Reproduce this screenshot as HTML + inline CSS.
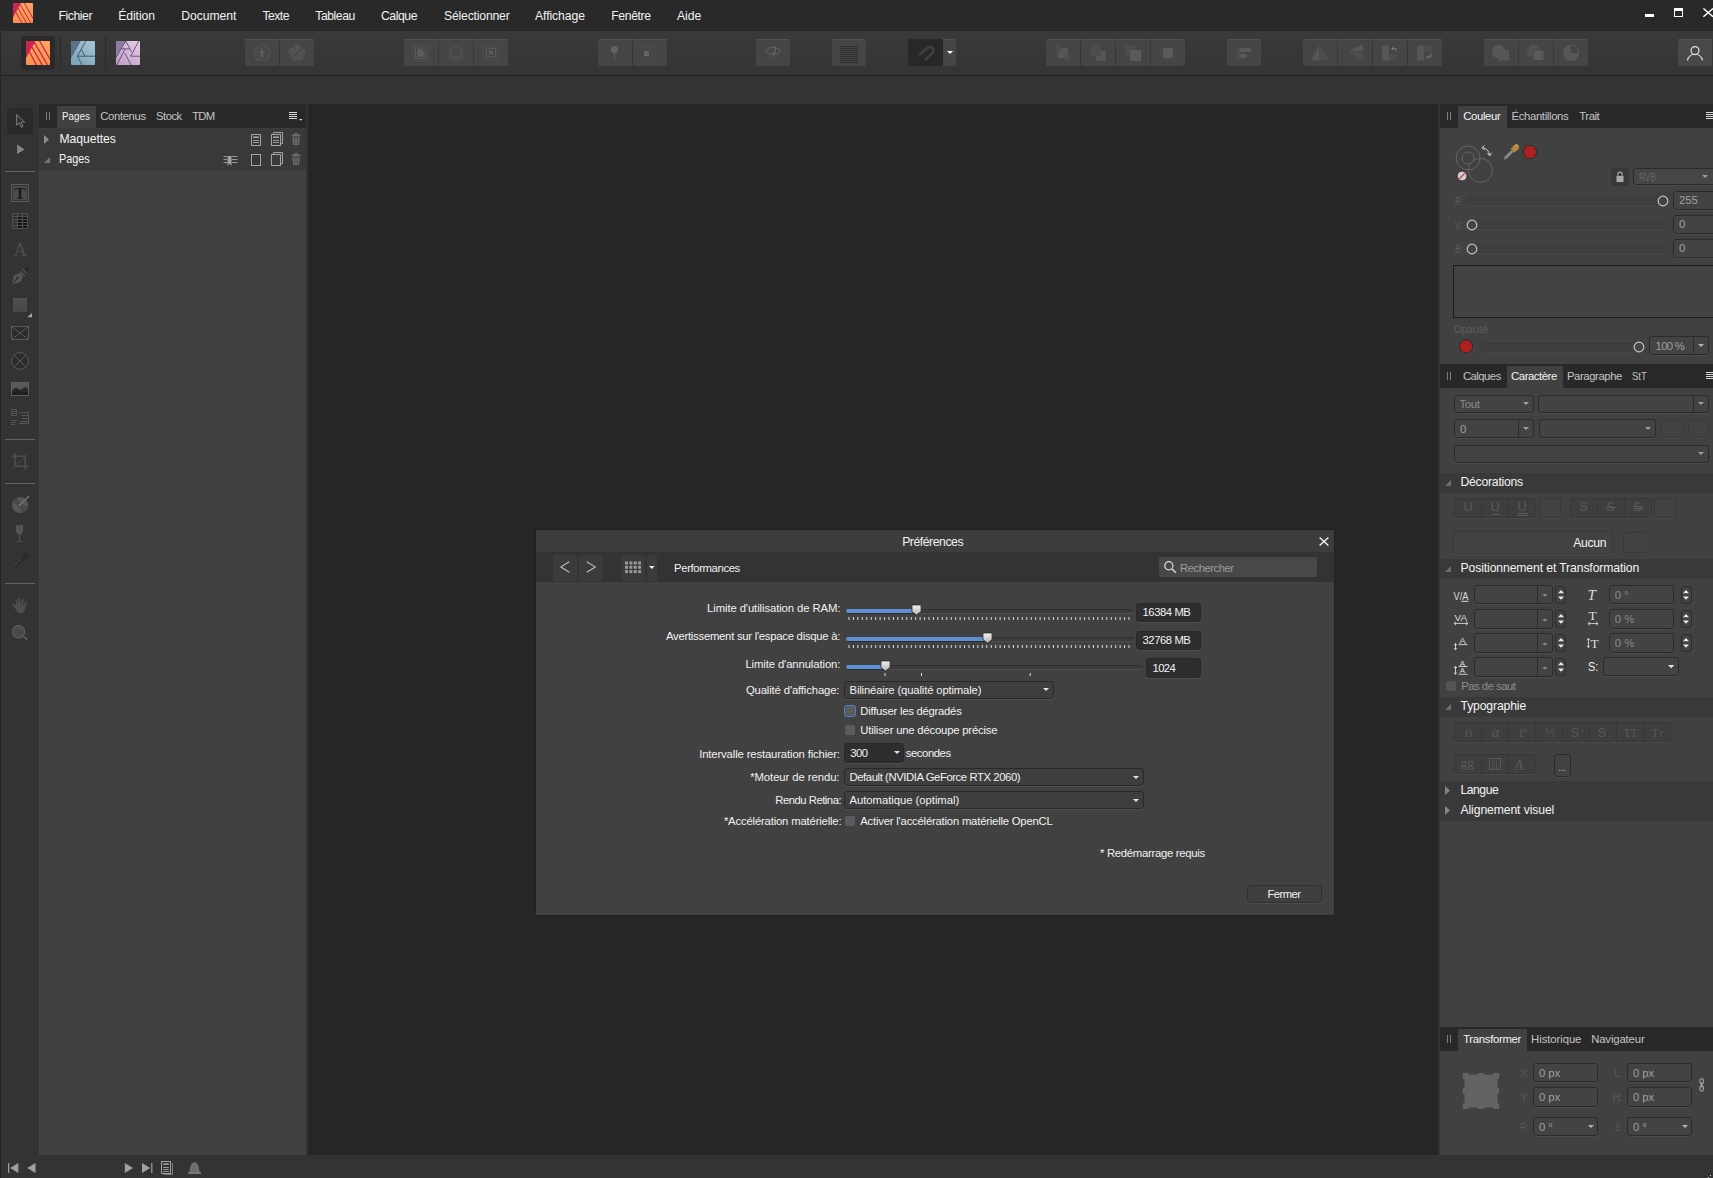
<!DOCTYPE html>
<html lang="fr"><head><meta charset="utf-8"><title>Affinity Publisher - Préférences</title>
<style>
html,body{margin:0;padding:0;background:#262626;}
body{width:1713px;height:1178px;position:relative;overflow:hidden;font-family:"Liberation Sans",sans-serif;}
div,svg,span.t{position:absolute;box-sizing:border-box;}
span.t{white-space:pre;line-height:1;}
svg{overflow:visible;}
</style></head>
<body>
<div style="left:0px;top:0px;width:1713px;height:31px;background:#292929;"></div>
<div style="left:0px;top:31px;width:1713px;height:44px;background:linear-gradient(#3a3a3a,#343434);"></div>
<div style="left:0px;top:75px;width:1713px;height:1px;background:#222222;"></div>
<div style="left:0px;top:76px;width:1713px;height:28px;background:#333333;"></div>
<div style="left:0px;top:104px;width:1713px;height:1051px;background:#333333;"></div>
<div style="left:308px;top:104px;width:1130px;height:1051px;background:#262626;"></div>
<div style="left:0px;top:1155px;width:1713px;height:23px;background:#333333;"></div>
<div style="left:0px;top:31px;width:1px;height:1147px;background:#252525;"></div>
<svg style="left:13px;top:3px;" width="20" height="20" viewBox="0 0 24 24"><defs><linearGradient id="go0" x1="0" y1="0" x2="0" y2="1"><stop offset="0" stop-color="#ffa262"/><stop offset="1" stop-color="#fb9150"/></linearGradient>
<clipPath id="cp0"><rect width="24" height="24" rx="1.1"/></clipPath></defs>
<g clip-path="url(#cp0)"><rect width="24" height="24" fill="url(#go0)"/>
<path d="M0 0H9.6L0 17Z" fill="#cb2450"/>
<g stroke="#b9223f" stroke-width="1.12" fill="none">
<path d="M13.2 -0.6L24.8 19.6"/><path d="M8.3 1.4L22.2 25.2"/><path d="M5.9 6.0L16.9 25.2"/><path d="M3.2 10.4L11.2 25.2"/></g></g></svg>
<span class="t" style="left:58.50px;top:10.20px;font-family:'Liberation Sans',sans-serif;font-size:12.2px;color:#f2f2f2;letter-spacing:-0.430px;">Fichier</span>
<span class="t" style="left:118.20px;top:10.20px;font-family:'Liberation Sans',sans-serif;font-size:12.2px;color:#f2f2f2;letter-spacing:-0.078px;">Édition</span>
<span class="t" style="left:181.20px;top:10.20px;font-family:'Liberation Sans',sans-serif;font-size:12.2px;color:#f2f2f2;letter-spacing:-0.035px;">Document</span>
<span class="t" style="left:262.40px;top:10.20px;font-family:'Liberation Sans',sans-serif;font-size:12.2px;color:#f2f2f2;letter-spacing:-0.510px;">Texte</span>
<span class="t" style="left:315.30px;top:10.20px;font-family:'Liberation Sans',sans-serif;font-size:12.2px;color:#f2f2f2;letter-spacing:-0.451px;">Tableau</span>
<span class="t" style="left:380.90px;top:10.20px;font-family:'Liberation Sans',sans-serif;font-size:12.2px;color:#f2f2f2;letter-spacing:-0.405px;">Calque</span>
<span class="t" style="left:444.00px;top:10.20px;font-family:'Liberation Sans',sans-serif;font-size:12.2px;color:#f2f2f2;letter-spacing:-0.179px;">Sélectionner</span>
<span class="t" style="left:535.00px;top:10.20px;font-family:'Liberation Sans',sans-serif;font-size:12.2px;color:#f2f2f2;letter-spacing:-0.076px;">Affichage</span>
<span class="t" style="left:611.30px;top:10.20px;font-family:'Liberation Sans',sans-serif;font-size:12.2px;color:#f2f2f2;letter-spacing:-0.386px;">Fenêtre</span>
<span class="t" style="left:676.90px;top:10.20px;font-family:'Liberation Sans',sans-serif;font-size:12.2px;color:#f2f2f2;letter-spacing:-0.035px;">Aide</span>
<div style="left:1645px;top:14px;width:9px;height:3px;background:#ffffff;"></div>
<div style="left:1674px;top:8px;width:9px;height:9px;border:1px solid #fff;border-top-width:3px;"></div>
<svg style="left:1703px;top:7.6px;" width="10" height="9" viewBox="0 0 10 9"><path d="M0.4 0.5L10 8.8M10 0.5L0.4 8.8" stroke="#fff" stroke-width="1.45" fill="none"/></svg>
<div style="left:21px;top:36px;width:34px;height:34px;background:#2a2a2a;border-radius:4px;"></div>
<svg style="left:26px;top:41px;" width="24" height="24" viewBox="0 0 24 24"><defs><linearGradient id="go" x1="0" y1="0" x2="0" y2="1"><stop offset="0" stop-color="#ffa262"/><stop offset="1" stop-color="#fb9150"/></linearGradient>
<clipPath id="cp"><rect width="24" height="24" rx="1.1"/></clipPath></defs>
<g clip-path="url(#cp)"><rect width="24" height="24" fill="url(#go)"/>
<path d="M0 0H9.6L0 17Z" fill="#cb2450"/>
<g stroke="#b9223f" stroke-width="1.12" fill="none">
<path d="M13.2 -0.6L24.8 19.6"/><path d="M8.3 1.4L22.2 25.2"/><path d="M5.9 6.0L16.9 25.2"/><path d="M3.2 10.4L11.2 25.2"/></g></g></svg>
<div style="left:60px;top:36px;width:1px;height:34px;background:#2a2a2a;"></div>
<div style="left:105px;top:36px;width:1px;height:34px;background:#2a2a2a;"></div>
<svg style="left:71px;top:41px;" width="24" height="24" viewBox="0 0 24 24"><defs><linearGradient id="gd" x1="1" y1="0" x2="0.3" y2="1"><stop offset="0" stop-color="#a6c8d3"/><stop offset="1" stop-color="#7ea4b8"/></linearGradient><clipPath id="cd"><rect width="24" height="24" rx="1.1"/></clipPath></defs>
<g clip-path="url(#cd)"><rect width="24" height="24" fill="url(#gd)"/><path d="M0 0H9.3L0 16.5Z" fill="#5b7189"/>
<g stroke="#41566b" stroke-width="0.95" fill="none"><path d="M9.3 0L0 16.6" stroke-width="0.6"/><path d="M15.1 -0.5L6.3 15.2L11.5 24.6"/><path d="M10.4 8.7L14 15.2"/><path d="M6.3 15.2H25"/></g></g></svg>
<svg style="left:116px;top:41px;" width="24" height="24" viewBox="0 0 24 24"><defs><linearGradient id="gp" x1="1" y1="0" x2="0.2" y2="1"><stop offset="0" stop-color="#e6cfe6"/><stop offset="1" stop-color="#c49fc9"/></linearGradient><clipPath id="cq"><rect width="24" height="24" rx="1.1"/></clipPath></defs>
<g clip-path="url(#cq)"><rect width="24" height="24" fill="url(#gp)"/><path d="M0 0H9.5L0 16.5Z" fill="#8f7ba6"/>
<g stroke="#5d4c72" stroke-width="0.9" fill="none"><path d="M9.7 0L0 16.6"/><path d="M9.7 0L15.6 11"/><path d="M5.6 7.9H13.6"/><path d="M23 -0.6L14.8 15.2H25"/><path d="M9.2 7.9L0.5 24.6"/><path d="M8.9 12.4L15.3 24.6"/></g></g></svg>
<div style="left:245px;top:39px;width:34px;height:27px;background:#454545;border-top:1px solid #525252;border-radius:2px 0px 0px 2px;"></div>
<div style="left:280px;top:39px;width:34px;height:27px;background:#454545;border-top:1px solid #525252;border-radius:0px 2px 2px 0px;"></div>
<svg style="left:0px;top:0px;" width="1713" height="80" viewBox="0 0 1713 80"><circle cx="262.0" cy="48.4" r="4.1" fill="#585858"/><circle cx="266.4" cy="51.6" r="4.1" fill="#585858"/><circle cx="264.7" cy="56.7" r="4.1" fill="#585858"/><circle cx="259.3" cy="56.7" r="4.1" fill="#585858"/><circle cx="257.6" cy="51.6" r="4.1" fill="#585858"/><circle cx="262.0" cy="48.4" r="3.3" fill="#494949"/><circle cx="266.4" cy="51.6" r="3.3" fill="#494949"/><circle cx="264.7" cy="56.7" r="3.3" fill="#494949"/><circle cx="259.3" cy="56.7" r="3.3" fill="#494949"/><circle cx="257.6" cy="51.6" r="3.3" fill="#494949"/><circle cx="262" cy="53" r="4.5" fill="#494949"/><path d="M262 49L265 53H263.2V57H260.8V53H259Z" fill="#5e5e5e"/></svg>
<svg style="left:0px;top:0px;" width="1713" height="80" viewBox="0 0 1713 80"><circle cx="297.0" cy="48.4" r="4.1" fill="#525252"/><circle cx="301.4" cy="51.6" r="4.1" fill="#525252"/><circle cx="299.7" cy="56.7" r="4.1" fill="#525252"/><circle cx="294.3" cy="56.7" r="4.1" fill="#525252"/><circle cx="292.6" cy="51.6" r="4.1" fill="#525252"/><circle cx="297" cy="53" r="4.5" fill="#525252"/><path d="M291 59.5L303.5 47" stroke="#454545" stroke-width="1.4"/></svg>
<div style="left:404px;top:39px;width:34px;height:27px;background:#454545;border-top:1px solid #525252;border-radius:2px 0px 0px 2px;"></div>
<div style="left:439px;top:39px;width:34px;height:27px;background:#454545;border-top:1px solid #525252;border-radius:0px 0px 0px 0px;"></div>
<div style="left:474px;top:39px;width:34px;height:27px;background:#454545;border-top:1px solid #525252;border-radius:0px 2px 2px 0px;"></div>
<svg style="left:0px;top:0px;" width="1713" height="80" viewBox="0 0 1713 80"><rect x="412" y="44" width="18" height="1" fill="#4b4b4b"/><rect x="412" y="46" width="18" height="1" fill="#4b4b4b"/><rect x="412" y="48" width="18" height="1" fill="#4b4b4b"/><rect x="412" y="50" width="18" height="1" fill="#4b4b4b"/><rect x="412" y="52" width="18" height="1" fill="#4b4b4b"/><rect x="412" y="54" width="18" height="1" fill="#4b4b4b"/><rect x="412" y="56" width="18" height="1" fill="#4b4b4b"/><rect x="412" y="58" width="18" height="1" fill="#4b4b4b"/><rect x="412" y="60" width="18" height="1" fill="#4b4b4b"/></svg>
<svg style="left:0px;top:0px;" width="1713" height="80" viewBox="0 0 1713 80"><rect x="447" y="44" width="18" height="1" fill="#4b4b4b"/><rect x="447" y="46" width="18" height="1" fill="#4b4b4b"/><rect x="447" y="48" width="18" height="1" fill="#4b4b4b"/><rect x="447" y="50" width="18" height="1" fill="#4b4b4b"/><rect x="447" y="52" width="18" height="1" fill="#4b4b4b"/><rect x="447" y="54" width="18" height="1" fill="#4b4b4b"/><rect x="447" y="56" width="18" height="1" fill="#4b4b4b"/><rect x="447" y="58" width="18" height="1" fill="#4b4b4b"/><rect x="447" y="60" width="18" height="1" fill="#4b4b4b"/></svg>
<svg style="left:0px;top:0px;" width="1713" height="80" viewBox="0 0 1713 80"><rect x="482" y="44" width="18" height="1" fill="#4b4b4b"/><rect x="482" y="46" width="18" height="1" fill="#4b4b4b"/><rect x="482" y="48" width="18" height="1" fill="#4b4b4b"/><rect x="482" y="50" width="18" height="1" fill="#4b4b4b"/><rect x="482" y="52" width="18" height="1" fill="#4b4b4b"/><rect x="482" y="54" width="18" height="1" fill="#4b4b4b"/><rect x="482" y="56" width="18" height="1" fill="#4b4b4b"/><rect x="482" y="58" width="18" height="1" fill="#4b4b4b"/><rect x="482" y="60" width="18" height="1" fill="#4b4b4b"/></svg>
<svg style="left:0px;top:0px;" width="1713" height="80" viewBox="0 0 1713 80"><path d="M415.5 46.6H421.5L426.5 51.6V58.5H415.5Z" fill="#454545" stroke="#585858" stroke-width="1"/><path d="M417.3 48.4H420.8L424.7 52.3V56.7H417.3Z" fill="#5c5c5c"/></svg>
<svg style="left:0px;top:0px;" width="1713" height="80" viewBox="0 0 1713 80"><circle cx="456" cy="52.5" r="6" fill="none" stroke="#585858" stroke-width="1"/></svg>
<svg style="left:0px;top:0px;" width="1713" height="80" viewBox="0 0 1713 80"><rect x="486.5" y="48.5" width="9" height="8" fill="#454545" stroke="#585858" stroke-width="1"/><path d="M488.8 50.3L493.2 54.7M493.2 50.3L488.8 54.7" stroke="#666" stroke-width="1.1"/></svg>
<div style="left:598px;top:39px;width:34px;height:27px;background:#454545;border-top:1px solid #525252;border-radius:2px 0px 0px 2px;"></div>
<div style="left:633px;top:39px;width:34px;height:27px;background:#454545;border-top:1px solid #525252;border-radius:0px 2px 2px 0px;"></div>
<svg style="left:0px;top:0px;" width="1713" height="80" viewBox="0 0 1713 80"><circle cx="614.5" cy="49.6" r="3.6" fill="#626262"/><rect x="614" y="52" width="1" height="7" fill="#626262"/></svg>
<svg style="left:0px;top:0px;" width="1713" height="80" viewBox="0 0 1713 80"><rect x="644" y="51" width="5" height="5" fill="#666"/><rect x="642" y="45" width="9" height="1" fill="#4a4a4a"/><rect x="642" y="47" width="16" height="1" fill="#4a4a4a"/><rect x="642" y="49" width="10" height="1" fill="#4a4a4a"/><rect x="650" y="51" width="9" height="1" fill="#4a4a4a"/><rect x="650" y="53" width="4" height="1" fill="#4a4a4a"/><rect x="650" y="55" width="8" height="1" fill="#4a4a4a"/><rect x="642" y="57" width="10" height="1" fill="#4a4a4a"/><rect x="642" y="59" width="16" height="1" fill="#4a4a4a"/></svg>
<div style="left:756px;top:39px;width:34px;height:27px;background:#454545;border-top:1px solid #525252;border-radius:2px 2px 2px 2px;"></div>
<svg style="left:0px;top:0px;" width="1713" height="80" viewBox="0 0 1713 80"><path d="M765.5 50.5Q773 43.5 780.5 50.5L777.5 54.5Q773 51.5 768.5 54.5Z" fill="none" stroke="#646464" stroke-width="1"/><path d="M776 47.5L773 57" stroke="#6a6a6a" stroke-width="1.2"/></svg>
<div style="left:832px;top:39px;width:34px;height:27px;background:#454545;border-top:1px solid #525252;border-radius:2px 2px 2px 2px;"></div>
<svg style="left:0px;top:0px;" width="1713" height="80" viewBox="0 0 1713 80"><rect x="840" y="46" width="18" height="1" fill="#2e2e2e"/><rect x="840" y="48" width="18" height="1" fill="#2e2e2e"/><rect x="840" y="50" width="18" height="1" fill="#2e2e2e"/><rect x="840" y="52" width="18" height="1" fill="#2e2e2e"/><rect x="840" y="54" width="18" height="1" fill="#2e2e2e"/><rect x="840" y="56" width="18" height="1" fill="#2e2e2e"/><rect x="840" y="58" width="18" height="1" fill="#2e2e2e"/><rect x="840" y="60" width="18" height="1" fill="#2e2e2e"/><rect x="840" y="62" width="18" height="1" fill="#2e2e2e"/></svg>
<div style="left:908px;top:39px;width:35px;height:27px;background:#282828;border-radius:2px 0 0 2px;"></div>
<svg style="left:0px;top:0px;" width="1713" height="80" viewBox="0 0 1713 80"><path d="M919 55L928 47.5A3.6 3.6 0 0 1 932.5 53L925 60" fill="none" stroke="#3f3f3f" stroke-width="2.6"/></svg>
<div style="left:943px;top:39px;width:13px;height:27px;background:#454545;border-top:1px solid #525252;border-radius:0 2px 2px 0;"></div>
<svg style="left:947px;top:51px;" width="6" height="3" viewBox="0 0 6 3"><path d="M0 0H6L3 3Z" fill="#fff"/></svg>
<div style="left:1046px;top:39px;width:34px;height:27px;background:#454545;border-top:1px solid #525252;border-radius:2px 0px 0px 2px;"></div>
<div style="left:1081px;top:39px;width:34px;height:27px;background:#454545;border-top:1px solid #525252;border-radius:0px 0px 0px 0px;"></div>
<div style="left:1116px;top:39px;width:34px;height:27px;background:#454545;border-top:1px solid #525252;border-radius:0px 0px 0px 0px;"></div>
<div style="left:1151px;top:39px;width:34px;height:27px;background:#454545;border-top:1px solid #525252;border-radius:0px 2px 2px 0px;"></div>
<svg style="left:0px;top:0px;" width="1713" height="80" viewBox="0 0 1713 80"><rect x="1058" y="48" width="10" height="10" fill="#565656"/><rect x="1055" y="45" width="6" height="6" fill="#4c4c4c"/><rect x="1065" y="55" width="6" height="6" fill="#4c4c4c"/>
<rect x="1096" y="51" width="10" height="10" fill="#565656"/><rect x="1090" y="45" width="11" height="11" fill="#4c4c4c"/>
<rect x="1125" y="45" width="10" height="10" fill="#4c4c4c"/><rect x="1130" y="50" width="11" height="11" fill="#5a5a5a"/>
<rect x="1166.5" y="51.5" width="9" height="9" fill="none" stroke="#494949"/><rect x="1160.5" y="45.5" width="9" height="9" fill="none" stroke="#494949"/><rect x="1163" y="48" width="10" height="10" fill="#5a5a5a"/></svg>
<div style="left:1227px;top:39px;width:34px;height:27px;background:#454545;border-top:1px solid #525252;border-radius:2px 2px 2px 2px;"></div>
<svg style="left:0px;top:0px;" width="1713" height="80" viewBox="0 0 1713 80"><rect x="1237" y="45" width="1" height="16" fill="#4c4c4c"/><rect x="1239" y="48" width="12" height="4" fill="#585858"/><rect x="1239" y="54" width="8" height="4" fill="#585858"/></svg>
<div style="left:1303px;top:39px;width:34px;height:27px;background:#454545;border-top:1px solid #525252;border-radius:2px 0px 0px 2px;"></div>
<div style="left:1338px;top:39px;width:34px;height:27px;background:#454545;border-top:1px solid #525252;border-radius:0px 0px 0px 0px;"></div>
<div style="left:1373px;top:39px;width:34px;height:27px;background:#454545;border-top:1px solid #525252;border-radius:0px 0px 0px 0px;"></div>
<div style="left:1408px;top:39px;width:34px;height:27px;background:#454545;border-top:1px solid #525252;border-radius:0px 2px 2px 0px;"></div>
<svg style="left:0px;top:0px;" width="1713" height="80" viewBox="0 0 1713 80"><path d="M1311 60.6L1319.2 45V60.6Z" fill="#565656"/><path d="M1320 45L1329 60.6H1320Z" fill="#4c4c4c"/>
<path d="M1348 51.3L1363 44.2V51.3Z" fill="#565656"/><path d="M1348 52.3H1363V62Z" fill="#4c4c4c"/>
<rect x="1382" y="45.5" width="7" height="15" fill="#565656"/><rect x="1389" y="54" width="8" height="6.5" fill="#4c4c4c"/><path d="M1396 51.5V48.5H1391.5M1393.3 46.8L1391.5 48.5L1393.3 50.2" fill="none" stroke="#777" stroke-width="1"/>
<rect x="1417" y="45.5" width="7" height="15" fill="#565656"/><rect x="1424" y="45.5" width="8" height="6" fill="#4c4c4c"/><path d="M1431 53.5V57H1426.5M1428.3 55.3L1426.5 57L1428.3 58.7" fill="none" stroke="#777" stroke-width="1"/></svg>
<div style="left:1484px;top:39px;width:34px;height:27px;background:#454545;border-top:1px solid #525252;border-radius:2px 0px 0px 2px;"></div>
<div style="left:1519px;top:39px;width:34px;height:27px;background:#454545;border-top:1px solid #525252;border-radius:0px 0px 0px 0px;"></div>
<div style="left:1554px;top:39px;width:34px;height:27px;background:#454545;border-top:1px solid #525252;border-radius:0px 2px 2px 0px;"></div>
<svg style="left:0px;top:0px;" width="1713" height="80" viewBox="0 0 1713 80"><circle cx="1498.5" cy="51.5" r="6.7" fill="#565656"/><rect x="1498" y="50" width="11" height="10.6" fill="#565656"/>
<circle cx="1533.5" cy="51.2" r="6.6" fill="#515151"/><rect x="1533" y="50" width="11" height="10.6" fill="#5a5a5a" stroke="#454545" stroke-width="1"/>
<path d="M1571 45A8 8 0 1 0 1579 53H1571Z" fill="#565656"/><path d="M1571 45A8 8 0 0 1 1579 53" fill="none" stroke="#565656" stroke-width="1.2"/><rect x="1572" y="54" width="7" height="7" fill="#565656" opacity="0.0"/><path d="M1572 61V54H1578.8A8 8 0 0 1 1572 61Z" fill="#565656"/></svg>
<div style="left:1678px;top:39px;width:34px;height:27px;background:#484848;border-top:1px solid #555;border-radius:2px;"></div>
<svg style="left:0px;top:0px;" width="1713" height="80" viewBox="0 0 1713 80"><circle cx="1695" cy="50.6" r="4" fill="none" stroke="#e6e6e6" stroke-width="1.2"/><path d="M1687.4 60.3A7.8 7.8 0 0 1 1702.6 60.3" fill="none" stroke="#e6e6e6" stroke-width="1.2"/></svg>
<div style="left:6px;top:107px;width:28px;height:28px;background:#2a2a2a;border-radius:4px;border:1px solid #313131;"></div>
<svg style="left:0px;top:0px;" width="40" height="700" viewBox="0 0 40 700"><path d="M16.6 114.5V125.2L19.2 122.8L21.2 127.3L23 126.5L21 122.1H24.6Z" fill="#313131" stroke="#7c7c7c" stroke-width="1" stroke-linejoin="round"/><path d="M16.6 143.6V154.8L25.4 149.6Z" fill="#858585" stroke="#2a2a2a" stroke-width="0.8" stroke-linejoin="round"/><rect x="5" y="171" width="30" height="1" fill="#626262"/><rect x="5" y="439" width="30" height="1" fill="#626262"/><rect x="5" y="483" width="30" height="1" fill="#626262"/><rect x="5" y="583" width="30" height="1" fill="#626262"/><rect x="11.5" y="184.5" width="17" height="17" fill="none" stroke="#5c5c5c"/><rect x="13" y="186" width="14" height="14" fill="#4c4c4c"/><text x="20" y="199.3" font-family="Liberation Serif,serif" font-size="17" font-weight="bold" text-anchor="middle" fill="#1c1c1c">T</text><rect x="12" y="213" width="16" height="16" rx="0.8" fill="#4f4f4f"/><rect x="13" y="214.1" width="3.9" height="1.8" fill="#2f2f2f"/><rect x="13" y="217.1" width="3.9" height="1.8" fill="#2f2f2f"/><rect x="13" y="220.1" width="3.9" height="1.8" fill="#2f2f2f"/><rect x="13" y="223.05" width="3.9" height="1.8" fill="#2f2f2f"/><rect x="13" y="226" width="3.9" height="1.8" fill="#2f2f2f"/><rect x="18" y="214.1" width="3.9" height="1.8" fill="#2f2f2f"/><rect x="18" y="217.1" width="3.9" height="1.8" fill="#0e0e0e"/><rect x="18" y="220.1" width="3.9" height="1.8" fill="#0e0e0e"/><rect x="18" y="223.05" width="3.9" height="1.8" fill="#0e0e0e"/><rect x="18" y="226" width="3.9" height="1.8" fill="#0e0e0e"/><rect x="23.1" y="214.1" width="3.9" height="1.8" fill="#2f2f2f"/><rect x="23.1" y="217.1" width="3.9" height="1.8" fill="#0e0e0e"/><rect x="23.1" y="220.1" width="3.9" height="1.8" fill="#0e0e0e"/><rect x="23.1" y="223.05" width="3.9" height="1.8" fill="#0e0e0e"/><rect x="23.1" y="226" width="3.9" height="1.8" fill="#0e0e0e"/><text x="20.2" y="255.8" font-family="Liberation Serif,serif" font-size="18.5" text-anchor="middle" fill="#4e4e4e">A</text><path d="M11.9 284.7L13.7 275.7L20 272.8L23 276L20.9 281.7Z" fill="#565656"/><path d="M12.4 284.2L17.4 278.2" stroke="#272727" stroke-width="1"/><circle cx="17.7" cy="277.8" r="1.15" fill="#272727"/><path d="M23.6 268.4L27.2 272.2L29 267.6L28.4 267Z" fill="#2a2a2a"/><path d="M20.3 271.3L24.8 275.7" stroke="#5a5a5a" stroke-width="1.2"/><path d="M21.25 270.25L25.75 274.65" stroke="#232323" stroke-width="0.9"/><path d="M22.2 269.2L26.6 273.6" stroke="#5a5a5a" stroke-width="1.2"/><defs><linearGradient id="grt" x1="0" y1="0" x2="0" y2="1"><stop offset="0" stop-color="#505050"/><stop offset="1" stop-color="#474747"/></linearGradient></defs><rect x="13" y="298" width="14" height="14" fill="url(#grt)"/><path d="M32 313V317.3H27.3Z" fill="#a8a8a8"/><rect x="11.5" y="326.5" width="17" height="13" fill="#2c2c2c" stroke="#585858"/><path d="M11.5 326.5L28.5 339.5M28.5 326.5L11.5 339.5" stroke="#585858" stroke-width="1"/><circle cx="20" cy="361" r="8.4" fill="#2c2c2c" stroke="#585858"/><path d="M14.1 355.1L25.9 366.9M25.9 355.1L14.1 366.9" stroke="#585858" stroke-width="1"/><rect x="11.5" y="382.5" width="17" height="13" fill="#585858" stroke="#5e5e5e"/><path d="M12 391Q15 386 18 388.5T23 388Q26 386 28 389V395H12Z" fill="#2a2a2a"/><path d="M12 393Q17 390 21 391.5T28 392V395H12Z" fill="#1e1e1e"/><g fill="none" stroke="#545454" stroke-width="1"><rect x="11.5" y="409.5" width="5" height="6"/><path d="M11.5 411.5H16.5M11.5 413.5H16.5"/><path d="M11 420.5H17M11 422.5H16M11 424.5H15"/><path d="M19 412.5H28.5V423.5H19M21 415.5H28M22 418.5H28M20 421.5H28"/></g><g fill="none" stroke="#4e4e4e" stroke-width="1.6"><path d="M15 453V466.3H28.4"/><path d="M11.8 456.2H25.2V469.4"/></g><path d="M11.8 469.4L28.4 453" stroke="#4e4e4e" stroke-width="0.9"/><circle cx="20" cy="505" r="8" fill="#575757"/><path d="M20 505L12.4 502.4A8 8 0 0 1 17 497.6Z" fill="#474747"/><path d="M20 505L27.8 506.5A8 8 0 0 1 22 512.7Z" fill="#494949"/><circle cx="20" cy="505" r="2.6" fill="#444"/><path d="M20 505L28 497" stroke="#767676" stroke-width="1.1"/><circle cx="20" cy="505" r="1.2" fill="#767676"/><circle cx="28" cy="497" r="1" fill="#767676"/><path d="M16 525H23L23 530.5Q22.6 534.4 19.5 534.6Q16.4 534.4 16 530.5Z" fill="#545454"/><rect x="19" y="534" width="1" height="7" fill="#545454"/><path d="M16.6 541.4H22.4" stroke="#545454" stroke-width="1"/><path d="M12.3 568.5L13.4 565.6L21 558L23.2 560.2L15.4 567.8Z" fill="#2a2a2a"/><path d="M20.2 556.8L24.4 561L25.3 560L28 557.2Q28.8 555 27.2 553.6Q25.6 552.3 23.8 553.4L21.2 556Z" fill="#2c2c2c"/><path d="M14 566.3L21.2 559" stroke="#555" stroke-width="0.8"/><path d="M14.6 607.2L12.4 605.3Q11.8 603.6 13.6 604L16 605.6L15.4 599.8Q15.8 598.4 16.9 599.6L17.9 604.6L18.6 598Q19.4 596.6 20.2 598L20.5 604.4L22.4 598.8Q23.4 597.8 23.9 599.2L23 605.4L25.6 601.6Q26.8 600.9 27.2 602.2L25.2 608.6Q24.2 613 20.8 613.6Q17.4 613.8 14.6 607.2Z" fill="#4e4e4e"/><circle cx="18.5" cy="631.7" r="6.2" fill="#4a4a4a" stroke="#606060" stroke-width="1.1"/><path d="M23.3 636.2L27.4 639.6" stroke="#606060" stroke-width="1.4"/></svg>
<div style="left:39px;top:104px;width:267px;height:1051px;background:#414141;"></div>
<div style="left:39px;top:104px;width:267px;height:24px;background:#282828;"></div>
<div style="left:39px;top:128px;width:267px;height:1px;background:#3c3c3c;"></div>
<div style="left:57px;top:106px;width:39px;height:22px;background:#414141;"></div>
<div style="left:46px;top:112px;width:1px;height:8px;background:#7d7d7d;"></div>
<div style="left:49px;top:112px;width:1px;height:8px;background:#7d7d7d;"></div>
<span class="t" style="left:62.30px;top:111.00px;font-family:'Liberation Sans',sans-serif;font-size:11.3px;color:#f4f4f4;transform:scaleX(0.8675);transform-origin:0 0;">Pages</span>
<span class="t" style="left:100.30px;top:111.00px;font-family:'Liberation Sans',sans-serif;font-size:11.3px;color:#c4c4c4;letter-spacing:-0.366px;">Contenus</span>
<span class="t" style="left:156.00px;top:111.00px;font-family:'Liberation Sans',sans-serif;font-size:11.3px;color:#c4c4c4;letter-spacing:-0.516px;">Stock</span>
<span class="t" style="left:192.20px;top:111.00px;font-family:'Liberation Sans',sans-serif;font-size:11.3px;color:#c4c4c4;letter-spacing:-0.742px;">TDM</span>
<div style="left:289px;top:112px;width:8px;height:1px;background:#d8d8d8;"></div>
<div style="left:289px;top:114px;width:8px;height:1px;background:#d8d8d8;"></div>
<div style="left:289px;top:116px;width:8px;height:1px;background:#d8d8d8;"></div>
<div style="left:289px;top:118px;width:8px;height:1px;background:#d8d8d8;"></div>
<svg style="left:298.5px;top:118.5px;" width="4" height="2" viewBox="0 0 4 2"><path d="M0 0H3.4L1.7 1.8Z" fill="#d8d8d8"/></svg>
<div style="left:39px;top:129px;width:267px;height:41px;background:#393939;"></div>
<svg style="left:44px;top:135px;" width="5" height="9" viewBox="0 0 5 9"><path d="M0 0L5 4.5L0 9Z" fill="#8c8c8c"/></svg>
<svg style="left:44px;top:157px;" width="6" height="6" viewBox="0 0 6 6"><path d="M6 0V6H0Z" fill="#767676"/></svg>
<span class="t" style="left:59.40px;top:133.00px;font-family:'Liberation Sans',sans-serif;font-size:12.2px;color:#f4f4f4;letter-spacing:-0.053px;">Maquettes</span>
<span class="t" style="left:59.40px;top:153.00px;font-family:'Liberation Sans',sans-serif;font-size:12.2px;color:#f4f4f4;transform:scaleX(0.8882);transform-origin:0 0;">Pages</span>
<svg style="left:0px;top:0px;" width="320" height="180" viewBox="0 0 320 180"><rect x="251.5" y="134.5" width="9" height="11" fill="none" stroke="#a2a2a2"/><rect x="253" y="136.4" width="6" height="1.6" fill="#a2a2a2"/><path d="M253 140.5H259M253 142.5H259" stroke="#a2a2a2" stroke-width="0.9"/><path d="M273.5 134.5V132.5H282.5V143.5H280.5" fill="none" stroke="#a2a2a2"/><rect x="271.5" y="134.5" width="9" height="11" fill="none" stroke="#a2a2a2"/><rect x="273" y="136.4" width="6" height="1.6" fill="#a2a2a2"/><path d="M273 140.5H279M273 142.5H279" stroke="#a2a2a2" stroke-width="0.9"/><path d="M291.8 135.5Q291.8 134.3 293.0 134.3H299.1Q300.3 134.3 300.3 135.5V136.4H291.8Z" fill="#6a6a6a"/><rect x="294.6" y="133" width="3" height="1.5" fill="#6a6a6a"/><path d="M292.40000000000003 137.4H299.7L299.1 145H293.0Z" fill="#6a6a6a"/><path d="M294.8 138V144.3M297.3 138V144.3" stroke="#3a3a3a" stroke-width="0.7"/><path d="M223.5 156.5H227M223.5 159.5H227M223.5 162.5H227M232 156.5H237.5M232 159.5H237.5M232 162.5H237.5" stroke="#a2a2a2" stroke-width="0.9"/><path d="M227.5 156H231.5V165.8L229.5 163.6L227.5 165.8Z" fill="#a2a2a2"/><rect x="251.5" y="154.5" width="9" height="11" fill="none" stroke="#a2a2a2"/><path d="M273.5 154.5V152.5H282.5V163.5H280.5" fill="none" stroke="#a2a2a2"/><rect x="271.5" y="154.5" width="9" height="11" fill="none" stroke="#a2a2a2"/><path d="M291.8 155.5Q291.8 154.3 293.0 154.3H299.1Q300.3 154.3 300.3 155.5V156.4H291.8Z" fill="#6a6a6a"/><rect x="294.6" y="153" width="3" height="1.5" fill="#6a6a6a"/><path d="M292.40000000000003 157.4H299.7L299.1 165H293.0Z" fill="#6a6a6a"/><path d="M294.8 158V164.3M297.3 158V164.3" stroke="#3a3a3a" stroke-width="0.7"/></svg>
<svg style="left:0px;top:0px;" width="320" height="1178" viewBox="0 0 320 1178"><rect x="8" y="1163" width="1.2" height="10" fill="#a0a0a0"/><path d="M18.3 1163V1173L10.2 1168Z" fill="#a0a0a0"/><path d="M35.5 1163V1173L27.2 1168Z" fill="#a0a0a0"/><path d="M124.8 1163V1173L133 1168Z" fill="#a0a0a0"/><path d="M142 1163V1173L150.2 1168Z" fill="#a0a0a0"/><rect x="151.2" y="1163" width="1.2" height="10" fill="#a0a0a0"/><path d="M164 1173.5V1174.5H172.5V1163.5H171.5" fill="none" stroke="#7a7a7a" stroke-width="1"/><rect x="161.5" y="1161.5" width="9" height="12" fill="#333" stroke="#a0a0a0"/><rect x="163.2" y="1163.3" width="5.6" height="1.6" fill="#a0a0a0"/><path d="M163.2 1167.5H168.8M163.2 1169.5H168.8M163.2 1171.5H168.8" stroke="#a0a0a0" stroke-width="0.9"/><path d="M189.6 1171.2Q190.2 1162.2 194.5 1162.2Q198.8 1162.2 199.4 1171.2L201 1172.6V1173.6H188V1172.6Z" fill="#6e6e6e"/><path d="M188 1173.2H201" stroke="#8a8a8a" stroke-width="0.9"/></svg>
<div style="left:1440px;top:104px;width:273px;height:1051px;background:#414141;"></div>
<div style="left:1440px;top:104px;width:273px;height:24px;background:#282828;"></div>
<div style="left:1447px;top:112px;width:1px;height:8px;background:#7d7d7d;"></div>
<div style="left:1450px;top:112px;width:1px;height:8px;background:#7d7d7d;"></div>
<div style="left:1706px;top:112px;width:8px;height:1px;background:#d8d8d8;"></div>
<div style="left:1706px;top:114px;width:8px;height:1px;background:#d8d8d8;"></div>
<div style="left:1706px;top:116px;width:8px;height:1px;background:#d8d8d8;"></div>
<div style="left:1706px;top:118px;width:8px;height:1px;background:#d8d8d8;"></div>
<div style="left:1458px;top:106px;width:49px;height:22px;background:#414141;"></div>
<span class="t" style="left:1463.20px;top:111.00px;font-family:'Liberation Sans',sans-serif;font-size:11.3px;color:#f4f4f4;letter-spacing:-0.327px;">Couleur</span>
<span class="t" style="left:1511.50px;top:111.00px;font-family:'Liberation Sans',sans-serif;font-size:11.3px;color:#c4c4c4;letter-spacing:-0.338px;">Échantillons</span>
<span class="t" style="left:1579.30px;top:111.00px;font-family:'Liberation Sans',sans-serif;font-size:11.3px;color:#c4c4c4;letter-spacing:-0.447px;">Trait</span>
<svg style="left:0px;top:0px;" width="1713" height="200" viewBox="0 0 1713 200"><g fill="none" stroke="#646464" stroke-width="1"><circle cx="1480.4" cy="170.3" r="12"/><circle cx="1468.1" cy="158" r="12"/><circle cx="1468.1" cy="158" r="6"/></g><circle cx="1462.1" cy="176" r="5" fill="#cdcdcd" stroke="#2e2e2e" stroke-width="1"/><path d="M1458.6 179.4L1465.6 172.6" stroke="#d63a3a" stroke-width="1.3"/><path d="M1482.6 147.8Q1488.4 148.6 1489.6 155" fill="none" stroke="#c8c8c8" stroke-width="1"/><path d="M1484.6 145.6L1481.8 147.8L1484.8 149.8" fill="none" stroke="#c8c8c8" stroke-width="1"/><path d="M1487.4 153.2L1489.7 155.8L1491.6 152.8" fill="none" stroke="#c8c8c8" stroke-width="1"/><path d="M1503.4 160L1504.6 156.8L1511.4 150L1513.4 152L1506.6 158.8Z" fill="#8a8a8a"/><path d="M1503.4 160L1505 158.4L1507 158.4Z" fill="#555"/><path d="M1510.6 149L1514.4 152.8L1515.6 151.6L1518.6 149.2Q1520.2 146.8 1518.4 145Q1516.6 143.4 1514.4 144.8L1511.8 147.8Z" fill="#b08a3c"/><path d="M1515 145.4Q1516.8 144.4 1518 145.6" stroke="#d8b868" stroke-width="0.8" fill="none"/><circle cx="1529.9" cy="152" r="6.6" fill="#ae1f1f" stroke="#2c2c2c" stroke-width="1"/></svg>
<div style="left:1611px;top:168px;width:18px;height:18px;background:#383838;"></div>
<svg style="left:1611px;top:168px;" width="18" height="18" viewBox="0 0 18 18"><rect x="5.5" y="8" width="7" height="6" rx="0.6" fill="#a8a8a8"/><path d="M6.9 8V6.2A2.1 2.1 0 0 1 11.1 6.2V8" fill="none" stroke="#a8a8a8" stroke-width="1.1"/></svg>
<div style="left:1633px;top:168px;width:90px;height:17px;background:#464646;border:1px solid #2b2b2b;border-radius:3px;box-shadow:0 1px 0 rgba(255,255,255,0.05);"></div>
<span class="t" style="left:1638.60px;top:173.00px;font-family:'Liberation Sans',sans-serif;font-size:10px;color:#686868;transform:scaleX(0.8337);transform-origin:0 0;">RVB</span>
<svg style="left:1702px;top:175px;" width="6" height="3" viewBox="0 0 6 3"><path d="M0 0H6L3.0 3Z" fill="#9a9a9a"/></svg>
<span class="t" style="left:1454.60px;top:196.50px;font-family:'Liberation Sans',sans-serif;font-size:10px;color:#5e5e5e;transform:scaleX(0.7800);transform-origin:0 0;">R:</span>
<div style="left:1466.5px;top:196.0px;width:201.9000000000001px;height:9px;background:#3f3f3f;border:1px solid #3a3a3a;border-radius:5px;box-shadow:0 1px 0 rgba(255,255,255,0.03);"></div>
<svg style="left:1656.1px;top:193.5px;" width="14" height="14" viewBox="0 0 14 14"><circle cx="7" cy="7" r="4.85" fill="#444" stroke="#c2c2c2" stroke-width="1.2"/></svg>
<div style="left:1673px;top:191px;width:50px;height:18.5px;background:#434343;border:1px solid #2b2b2b;border-radius:3px;box-shadow:0 1px 0 rgba(255,255,255,0.05);"></div>
<span class="t" style="left:1679.00px;top:195.30px;font-family:'Liberation Sans',sans-serif;font-size:11.3px;color:#a0a0a0;">255</span>
<span class="t" style="left:1454.60px;top:220.50px;font-family:'Liberation Sans',sans-serif;font-size:10px;color:#5e5e5e;transform:scaleX(0.8592);transform-origin:0 0;">V:</span>
<div style="left:1466.5px;top:220.0px;width:201.9000000000001px;height:9px;background:#3f3f3f;border:1px solid #3a3a3a;border-radius:5px;box-shadow:0 1px 0 rgba(255,255,255,0.03);"></div>
<svg style="left:1464.9px;top:217.5px;" width="14" height="14" viewBox="0 0 14 14"><circle cx="7" cy="7" r="4.85" fill="#444" stroke="#c2c2c2" stroke-width="1.2"/></svg>
<div style="left:1673px;top:215px;width:50px;height:18.5px;background:#434343;border:1px solid #2b2b2b;border-radius:3px;box-shadow:0 1px 0 rgba(255,255,255,0.05);"></div>
<span class="t" style="left:1679.00px;top:219.30px;font-family:'Liberation Sans',sans-serif;font-size:11.3px;color:#a0a0a0;">0</span>
<span class="t" style="left:1454.60px;top:244.50px;font-family:'Liberation Sans',sans-serif;font-size:10px;color:#5e5e5e;transform:scaleX(0.8251);transform-origin:0 0;">B:</span>
<div style="left:1466.5px;top:244.0px;width:201.9000000000001px;height:9px;background:#3f3f3f;border:1px solid #3a3a3a;border-radius:5px;box-shadow:0 1px 0 rgba(255,255,255,0.03);"></div>
<svg style="left:1464.9px;top:241.5px;" width="14" height="14" viewBox="0 0 14 14"><circle cx="7" cy="7" r="4.85" fill="#444" stroke="#c2c2c2" stroke-width="1.2"/></svg>
<div style="left:1673px;top:239px;width:50px;height:18.5px;background:#434343;border:1px solid #2b2b2b;border-radius:3px;box-shadow:0 1px 0 rgba(255,255,255,0.05);"></div>
<span class="t" style="left:1679.00px;top:243.30px;font-family:'Liberation Sans',sans-serif;font-size:11.3px;color:#a0a0a0;">0</span>
<div style="left:1453px;top:265px;width:270px;height:53px;background:#434343;border:1px solid #1c1c1c;"></div>
<span class="t" style="left:1454.20px;top:324.00px;font-family:'Liberation Sans',sans-serif;font-size:11.3px;color:#5e5e5e;transform:scaleX(0.8732);transform-origin:0 0;">Opacité</span>
<svg style="left:0px;top:0px;" width="1713" height="360" viewBox="0 0 1713 360"><circle cx="1466" cy="346.4" r="6.6" fill="#ae1f1f" stroke="#2c2c2c" stroke-width="1"/></svg>
<div style="left:1479.3px;top:342.9px;width:165.4000000000001px;height:9px;background:#3f3f3f;border:1px solid #3a3a3a;border-radius:5px;box-shadow:0 1px 0 rgba(255,255,255,0.03);"></div>
<svg style="left:1632px;top:340.4px;" width="14" height="14" viewBox="0 0 14 14"><circle cx="7" cy="7" r="4.85" fill="#444" stroke="#c2c2c2" stroke-width="1.2"/></svg>
<div style="left:1649px;top:335.5px;width:60px;height:19.5px;background:#434343;border:1px solid #2b2b2b;border-radius:3px;box-shadow:0 1px 0 rgba(255,255,255,0.05);"></div>
<div style="left:1693px;top:336.5px;width:1px;height:17.5px;background:#2b2b2b;"></div>
<span class="t" style="left:1655.60px;top:341.00px;font-family:'Liberation Sans',sans-serif;font-size:11.3px;color:#a0a0a0;letter-spacing:-0.737px;">100 %</span>
<svg style="left:1698px;top:344px;" width="6" height="3" viewBox="0 0 6 3"><path d="M0 0H6L3.0 3Z" fill="#b4b4b4"/></svg>
<div style="left:1440px;top:364px;width:273px;height:24px;background:#282828;"></div>
<div style="left:1447px;top:372px;width:1px;height:8px;background:#7d7d7d;"></div>
<div style="left:1450px;top:372px;width:1px;height:8px;background:#7d7d7d;"></div>
<div style="left:1706px;top:372px;width:8px;height:1px;background:#d8d8d8;"></div>
<div style="left:1706px;top:374px;width:8px;height:1px;background:#d8d8d8;"></div>
<div style="left:1706px;top:376px;width:8px;height:1px;background:#d8d8d8;"></div>
<div style="left:1706px;top:378px;width:8px;height:1px;background:#d8d8d8;"></div>
<div style="left:1507px;top:366px;width:56px;height:22px;background:#414141;"></div>
<span class="t" style="left:1462.90px;top:371.00px;font-family:'Liberation Sans',sans-serif;font-size:11.3px;color:#c4c4c4;letter-spacing:-0.509px;">Calques</span>
<span class="t" style="left:1511.10px;top:371.00px;font-family:'Liberation Sans',sans-serif;font-size:11.3px;color:#f4f4f4;letter-spacing:-0.439px;">Caractère</span>
<span class="t" style="left:1567.00px;top:371.00px;font-family:'Liberation Sans',sans-serif;font-size:11.3px;color:#c4c4c4;letter-spacing:-0.416px;">Paragraphe</span>
<span class="t" style="left:1632.10px;top:371.00px;font-family:'Liberation Sans',sans-serif;font-size:11.3px;color:#c4c4c4;transform:scaleX(0.8363);transform-origin:0 0;">StT</span>
<div style="left:1454px;top:394.5px;width:80px;height:18.5px;background:#434343;border:1px solid #2b2b2b;border-radius:3px;box-shadow:0 1px 0 rgba(255,255,255,0.05);"></div>
<span class="t" style="left:1459.50px;top:399.00px;font-family:'Liberation Sans',sans-serif;font-size:11.3px;color:#8a8a8a;letter-spacing:-0.286px;">Tout</span>
<svg style="left:1523px;top:402.2px;" width="6" height="3" viewBox="0 0 6 3"><path d="M0 0H6L3.0 3Z" fill="#a0a0a0"/></svg>
<div style="left:1538px;top:394.5px;width:171px;height:18.5px;background:#434343;border:1px solid #2b2b2b;border-radius:3px;box-shadow:0 1px 0 rgba(255,255,255,0.05);"></div>
<div style="left:1693px;top:395.5px;width:1px;height:16.5px;background:#2b2b2b;"></div>
<svg style="left:1698px;top:402.2px;" width="6" height="3" viewBox="0 0 6 3"><path d="M0 0H6L3.0 3Z" fill="#a0a0a0"/></svg>
<div style="left:1454px;top:418.5px;width:80px;height:19.2px;background:#434343;border:1px solid #2b2b2b;border-radius:3px;box-shadow:0 1px 0 rgba(255,255,255,0.05);"></div>
<span class="t" style="left:1460.00px;top:423.70px;font-family:'Liberation Sans',sans-serif;font-size:11.3px;color:#a0a0a0;">0</span>
<div style="left:1518px;top:419.5px;width:1px;height:17.2px;background:#2b2b2b;"></div>
<svg style="left:1523px;top:426.6px;" width="6" height="3" viewBox="0 0 6 3"><path d="M0 0H6L3.0 3Z" fill="#a0a0a0"/></svg>
<div style="left:1539px;top:418.5px;width:117px;height:19.2px;background:#434343;border:1px solid #2b2b2b;border-radius:3px;box-shadow:0 1px 0 rgba(255,255,255,0.05);"></div>
<svg style="left:1645px;top:426.6px;" width="6" height="3" viewBox="0 0 6 3"><path d="M0 0H6L3.0 3Z" fill="#a0a0a0"/></svg>
<div style="left:1661px;top:418.5px;width:23px;height:19.2px;background:#424242;border:1px solid #3a3a3a;border-radius:3px;box-shadow:0 1px 0 rgba(255,255,255,0.05);"></div>
<div style="left:1688px;top:418.5px;width:21px;height:19.2px;background:#424242;border:1px solid #3a3a3a;border-radius:3px;box-shadow:0 1px 0 rgba(255,255,255,0.05);"></div>
<div style="left:1454px;top:444.5px;width:255px;height:18.3px;background:#434343;border:1px solid #2b2b2b;border-radius:3px;box-shadow:0 1px 0 rgba(255,255,255,0.05);"></div>
<svg style="left:1698px;top:451.5px;" width="6" height="3" viewBox="0 0 6 3"><path d="M0 0H6L3.0 3Z" fill="#a0a0a0"/></svg>
<div style="left:1440px;top:473px;width:273px;height:20px;background:#393939;"></div>
<svg style="left:1445.3px;top:480px;" width="6" height="6" viewBox="0 0 6 6"><path d="M6 0V6H0Z" fill="#6c6c6c"/></svg>
<span class="t" style="left:1460.50px;top:476.00px;font-family:'Liberation Sans',sans-serif;font-size:12.2px;color:#f4f4f4;letter-spacing:-0.235px;">Décorations</span>
<div style="left:1454px;top:498px;width:82px;height:19.5px;background:#3e3e3e;border:1px solid #373737;border-radius:3px;box-shadow:0 1px 0 rgba(255,255,255,0.05);"></div>
<div style="left:1481px;top:499px;width:1px;height:17.5px;background:#373737;"></div>
<div style="left:1508px;top:499px;width:1px;height:17.5px;background:#373737;"></div>
<div style="left:1569.5px;top:498px;width:82px;height:19.5px;background:#3e3e3e;border:1px solid #373737;border-radius:3px;box-shadow:0 1px 0 rgba(255,255,255,0.05);"></div>
<div style="left:1596.5px;top:499px;width:1px;height:17.5px;background:#373737;"></div>
<div style="left:1623.5px;top:499px;width:1px;height:17.5px;background:#373737;"></div>
<div style="left:1539px;top:498px;width:21.5px;height:19.8px;background:#424242;border:1px solid #383838;border-radius:3px;box-shadow:0 1px 0 rgba(255,255,255,0.05);"></div>
<div style="left:1654px;top:498px;width:21.5px;height:19.8px;background:#424242;border:1px solid #383838;border-radius:3px;box-shadow:0 1px 0 rgba(255,255,255,0.05);"></div>
<span class="t" style="left:1463.60px;top:501.00px;font-family:'Liberation Sans',sans-serif;font-size:12.8px;color:#5a5a5a;">U</span>
<span class="t" style="left:1490.60px;top:501.00px;font-family:'Liberation Sans',sans-serif;font-size:12.8px;color:#5a5a5a;">U</span>
<span class="t" style="left:1517.60px;top:501.00px;font-family:'Liberation Sans',sans-serif;font-size:12.8px;color:#5a5a5a;">U</span>
<div style="left:1490.5px;top:513.5px;width:10px;height:1px;background:#5a5a5a;"></div>
<div style="left:1517.5px;top:513px;width:10px;height:1px;background:#5a5a5a;"></div>
<div style="left:1517.5px;top:515px;width:10px;height:1px;background:#5a5a5a;"></div>
<span class="t" style="left:1579.30px;top:501.00px;font-family:'Liberation Sans',sans-serif;font-size:12.8px;color:#5a5a5a;">S</span>
<span class="t" style="left:1606.30px;top:501.00px;font-family:'Liberation Sans',sans-serif;font-size:12.8px;color:#5a5a5a;">S</span>
<span class="t" style="left:1633.30px;top:501.00px;font-family:'Liberation Sans',sans-serif;font-size:12.8px;color:#5a5a5a;">S</span>
<div style="left:1605.5px;top:507px;width:11px;height:1px;background:#5a5a5a;"></div>
<div style="left:1632.5px;top:506px;width:11px;height:1px;background:#5a5a5a;"></div>
<div style="left:1632.5px;top:508px;width:11px;height:1px;background:#5a5a5a;"></div>
<div style="left:1453px;top:531px;width:160px;height:22.5px;background:#424242;border:1px solid #383838;border-radius:3px;box-shadow:0 1px 0 rgba(255,255,255,0.05);"></div>
<span class="t" style="left:1573.20px;top:536.70px;font-family:'Liberation Sans',sans-serif;font-size:12.2px;color:#f4f4f4;letter-spacing:-0.291px;">Aucun</span>
<div style="left:1623px;top:532px;width:22px;height:20.5px;background:#424242;border:1px solid #383838;border-right:none;border-radius:3px 0 0 3px;"></div>
<div style="left:1440px;top:559px;width:273px;height:20px;background:#393939;"></div>
<svg style="left:1445.3px;top:566px;" width="6" height="6" viewBox="0 0 6 6"><path d="M6 0V6H0Z" fill="#6c6c6c"/></svg>
<span class="t" style="left:1460.50px;top:562.00px;font-family:'Liberation Sans',sans-serif;font-size:12.2px;color:#f4f4f4;letter-spacing:-0.111px;">Positionnement et Transformation</span>
<div style="left:1473.5px;top:585px;width:79.5px;height:19.4px;background:#434343;border:1px solid #2b2b2b;border-radius:3px;box-shadow:0 1px 0 rgba(255,255,255,0.05);"></div>
<div style="left:1537px;top:586px;width:1px;height:17.4px;background:#2b2b2b;"></div>
<svg style="left:1542.2px;top:594.3px;" width="5.6" height="2.8" viewBox="0 0 5.6 2.8"><path d="M0 0H5.6L2.8 2.8Z" fill="#858585"/></svg>
<div style="left:1555.3px;top:586.2px;width:10.5px;height:17.5px;background:#424242;border:1px solid #2b2b2b;border-radius:4px;"></div>
<svg style="left:1557.5px;top:590.2px;" width="6" height="10" viewBox="0 0 6 10"><path d="M0 3.2L3 0L6 3.2Z" fill="#e8e8e8"/><path d="M0 6.6L3 9.8L6 6.6Z" fill="#e8e8e8"/></svg>
<div style="left:1609px;top:585px;width:65px;height:19.4px;background:#434343;border:1px solid #2b2b2b;border-radius:3px;box-shadow:0 1px 0 rgba(255,255,255,0.05);"></div>
<div style="left:1681.2px;top:586.2px;width:10.5px;height:17.5px;background:#424242;border:1px solid #2b2b2b;border-radius:4px;"></div>
<svg style="left:1683.4px;top:590.2px;" width="6" height="10" viewBox="0 0 6 10"><path d="M0 3.2L3 0L6 3.2Z" fill="#e8e8e8"/><path d="M0 6.6L3 9.8L6 6.6Z" fill="#e8e8e8"/></svg>
<div style="left:1473.5px;top:609.2px;width:79.5px;height:19.4px;background:#434343;border:1px solid #2b2b2b;border-radius:3px;box-shadow:0 1px 0 rgba(255,255,255,0.05);"></div>
<div style="left:1537px;top:610.2px;width:1px;height:17.4px;background:#2b2b2b;"></div>
<svg style="left:1542.2px;top:618.5px;" width="5.6" height="2.8" viewBox="0 0 5.6 2.8"><path d="M0 0H5.6L2.8 2.8Z" fill="#858585"/></svg>
<div style="left:1555.3px;top:610.4000000000001px;width:10.5px;height:17.5px;background:#424242;border:1px solid #2b2b2b;border-radius:4px;"></div>
<svg style="left:1557.5px;top:614.4000000000001px;" width="6" height="10" viewBox="0 0 6 10"><path d="M0 3.2L3 0L6 3.2Z" fill="#e8e8e8"/><path d="M0 6.6L3 9.8L6 6.6Z" fill="#e8e8e8"/></svg>
<div style="left:1609px;top:609.2px;width:65px;height:19.4px;background:#434343;border:1px solid #2b2b2b;border-radius:3px;box-shadow:0 1px 0 rgba(255,255,255,0.05);"></div>
<div style="left:1681.2px;top:610.4000000000001px;width:10.5px;height:17.5px;background:#424242;border:1px solid #2b2b2b;border-radius:4px;"></div>
<svg style="left:1683.4px;top:614.4000000000001px;" width="6" height="10" viewBox="0 0 6 10"><path d="M0 3.2L3 0L6 3.2Z" fill="#e8e8e8"/><path d="M0 6.6L3 9.8L6 6.6Z" fill="#e8e8e8"/></svg>
<div style="left:1473.5px;top:633.2px;width:79.5px;height:19.4px;background:#434343;border:1px solid #2b2b2b;border-radius:3px;box-shadow:0 1px 0 rgba(255,255,255,0.05);"></div>
<div style="left:1537px;top:634.2px;width:1px;height:17.4px;background:#2b2b2b;"></div>
<svg style="left:1542.2px;top:642.5px;" width="5.6" height="2.8" viewBox="0 0 5.6 2.8"><path d="M0 0H5.6L2.8 2.8Z" fill="#858585"/></svg>
<div style="left:1555.3px;top:634.4000000000001px;width:10.5px;height:17.5px;background:#424242;border:1px solid #2b2b2b;border-radius:4px;"></div>
<svg style="left:1557.5px;top:638.4000000000001px;" width="6" height="10" viewBox="0 0 6 10"><path d="M0 3.2L3 0L6 3.2Z" fill="#e8e8e8"/><path d="M0 6.6L3 9.8L6 6.6Z" fill="#e8e8e8"/></svg>
<div style="left:1609px;top:633.2px;width:65px;height:19.4px;background:#434343;border:1px solid #2b2b2b;border-radius:3px;box-shadow:0 1px 0 rgba(255,255,255,0.05);"></div>
<div style="left:1681.2px;top:634.4000000000001px;width:10.5px;height:17.5px;background:#424242;border:1px solid #2b2b2b;border-radius:4px;"></div>
<svg style="left:1683.4px;top:638.4000000000001px;" width="6" height="10" viewBox="0 0 6 10"><path d="M0 3.2L3 0L6 3.2Z" fill="#e8e8e8"/><path d="M0 6.6L3 9.8L6 6.6Z" fill="#e8e8e8"/></svg>
<div style="left:1473.5px;top:657.2px;width:79.5px;height:19.4px;background:#434343;border:1px solid #2b2b2b;border-radius:3px;box-shadow:0 1px 0 rgba(255,255,255,0.05);"></div>
<div style="left:1537px;top:658.2px;width:1px;height:17.4px;background:#2b2b2b;"></div>
<svg style="left:1542.2px;top:666.5px;" width="5.6" height="2.8" viewBox="0 0 5.6 2.8"><path d="M0 0H5.6L2.8 2.8Z" fill="#858585"/></svg>
<div style="left:1555.3px;top:658.4000000000001px;width:10.5px;height:17.5px;background:#424242;border:1px solid #2b2b2b;border-radius:4px;"></div>
<svg style="left:1557.5px;top:662.4000000000001px;" width="6" height="10" viewBox="0 0 6 10"><path d="M0 3.2L3 0L6 3.2Z" fill="#e8e8e8"/><path d="M0 6.6L3 9.8L6 6.6Z" fill="#e8e8e8"/></svg>
<span class="t" style="left:1614.80px;top:590.00px;font-family:'Liberation Sans',sans-serif;font-size:11.3px;color:#8a8a8a;">0 °</span>
<span class="t" style="left:1614.80px;top:614.00px;font-family:'Liberation Sans',sans-serif;font-size:11.3px;color:#8a8a8a;">0 %</span>
<span class="t" style="left:1614.80px;top:638.00px;font-family:'Liberation Sans',sans-serif;font-size:11.3px;color:#8a8a8a;">0 %</span>
<div style="left:1603px;top:657.2px;width:76px;height:18.8px;background:#434343;border:1px solid #2b2b2b;border-radius:3px;box-shadow:0 1px 0 rgba(255,255,255,0.05);"></div>
<svg style="left:1667.6px;top:664.8px;" width="6.4" height="3.2" viewBox="0 0 6.4 3.2"><path d="M0 0H6.4L3.2 3.2Z" fill="#e0e0e0"/></svg>
<span class="t" style="left:1587.50px;top:660.60px;font-family:'Liberation Sans',sans-serif;font-size:12.2px;color:#f0f0f0;transform:scaleX(0.8944);transform-origin:0 0;">S:</span>
<svg style="left:0px;top:0px;" width="1713" height="700" viewBox="0 0 1713 700"><text x="1453.6" y="600.2" font-family="Liberation Sans,sans-serif" font-size="11.5" fill="#dcdcdc" textLength="14.8" lengthAdjust="spacingAndGlyphs">V/A</text><rect x="1461.4" y="600.8" width="6.9" height="1" fill="#dcdcdc"/><text x="1454.6" y="620.5" font-family="Liberation Sans,sans-serif" font-size="9.8" fill="#dcdcdc" textLength="12.6" lengthAdjust="spacingAndGlyphs">VA</text><path d="M1454.2 623.4H1467.8M1456 621.7L1454.2 623.4L1456 625.1M1466 621.7L1467.8 623.4L1466 625.1" stroke="#dcdcdc" stroke-width="0.9" fill="none"/><text x="1459.3" y="643.5" font-family="Liberation Sans,sans-serif" font-size="9.8" fill="#dcdcdc">A</text><rect x="1458.6" y="644.2" width="9" height="0.9" fill="#dcdcdc"/><path d="M1455.5 643.4V650M1454.1 645.2L1455.5 643.6L1456.9 645.2M1454.1 648.2L1455.5 649.8L1456.9 648.2" stroke="#dcdcdc" stroke-width="0.9" fill="none"/><text x="1459.8" y="665.6" font-family="Liberation Sans,sans-serif" font-size="8" fill="#dcdcdc">A</text><text x="1459.8" y="673.4" font-family="Liberation Sans,sans-serif" font-size="8" fill="#dcdcdc">A</text><rect x="1458.6" y="666" width="9" height="0.9" fill="#dcdcdc"/><rect x="1458.6" y="673.8" width="9" height="0.9" fill="#dcdcdc"/><path d="M1455.5 666.2V674.4M1454.1 668L1455.5 666.4L1456.9 668M1454.1 672.6L1455.5 674.2L1456.9 672.6" stroke="#dcdcdc" stroke-width="0.9" fill="none"/><text x="1587.6" y="600" font-family="Liberation Serif,serif" font-style="italic" font-size="15" fill="#dcdcdc">T</text><text x="1588.4" y="620.2" font-family="Liberation Serif,serif" font-size="13.5" fill="#dcdcdc">T</text><path d="M1588 623.6H1598M1589.8 621.9L1588 623.6L1589.8 625.3M1596.2 621.9L1598 623.6L1596.2 625.3" stroke="#dcdcdc" stroke-width="0.9" fill="none"/><text x="1590.6" y="647.6" font-family="Liberation Serif,serif" font-size="13.5" fill="#dcdcdc">T</text><path d="M1588.4 638.4V647.6M1587 640.2L1588.4 638.6L1589.8 640.2M1587 645.8L1588.4 647.4L1589.8 645.8" stroke="#dcdcdc" stroke-width="0.9" fill="none"/></svg>
<div style="left:1446px;top:681px;width:10px;height:10px;background:#555555;border-radius:2px;"></div>
<span class="t" style="left:1461.30px;top:681.00px;font-family:'Liberation Sans',sans-serif;font-size:11.3px;color:#8c8c8c;letter-spacing:-0.507px;">Pas de saut</span>
<div style="left:1440px;top:697px;width:273px;height:20px;background:#393939;"></div>
<svg style="left:1445.3px;top:704px;" width="6" height="6" viewBox="0 0 6 6"><path d="M6 0V6H0Z" fill="#6c6c6c"/></svg>
<span class="t" style="left:1460.50px;top:700.00px;font-family:'Liberation Sans',sans-serif;font-size:12.2px;color:#f4f4f4;letter-spacing:-0.139px;">Typographie</span>
<div style="left:1454px;top:722px;width:217px;height:19.5px;background:#3e3e3e;border:1px solid #373737;border-radius:3px;box-shadow:0 1px 0 rgba(255,255,255,0.05);"></div>
<div style="left:1481px;top:723px;width:1px;height:17.5px;background:#373737;"></div>
<div style="left:1508px;top:723px;width:1px;height:17.5px;background:#373737;"></div>
<div style="left:1535px;top:723px;width:1px;height:17.5px;background:#373737;"></div>
<div style="left:1562px;top:723px;width:1px;height:17.5px;background:#373737;"></div>
<div style="left:1589px;top:723px;width:1px;height:17.5px;background:#373737;"></div>
<div style="left:1616px;top:723px;width:1px;height:17.5px;background:#373737;"></div>
<div style="left:1643px;top:723px;width:1px;height:17.5px;background:#373737;"></div>
<div style="left:1454px;top:754px;width:82px;height:19.5px;background:#3e3e3e;border:1px solid #373737;border-radius:3px;box-shadow:0 1px 0 rgba(255,255,255,0.05);"></div>
<div style="left:1481px;top:755px;width:1px;height:17.5px;background:#373737;"></div>
<div style="left:1508px;top:755px;width:1px;height:17.5px;background:#373737;"></div>
<span class="t" style="left:1464.50px;top:725.80px;font-family:'Liberation Serif',serif;font-size:13.5px;color:#595959;">fi</span>
<span class="t" style="left:1491.75px;top:724.80px;font-family:'Liberation Serif',serif;font-size:15px;font-style:italic;color:#595959;">a</span>
<span class="t" style="left:1517.50px;top:725.80px;font-family:'Liberation Serif',serif;font-size:13.5px;color:#595959;">1</span>
<span class="t" style="left:1544.75px;top:725.80px;font-family:'Liberation Serif',serif;font-size:13.5px;color:#595959;">½</span>
<span class="t" style="left:1570.75px;top:726.80px;font-family:'Liberation Sans',sans-serif;font-size:12.5px;color:#595959;">S</span>
<span class="t" style="left:1597.75px;top:726.80px;font-family:'Liberation Sans',sans-serif;font-size:12.5px;color:#595959;">S</span>
<span class="t" style="left:1623.50px;top:727.80px;font-family:'Liberation Serif',serif;font-size:11.5px;color:#595959;">TT</span>
<span class="t" style="left:1651.50px;top:727.80px;font-family:'Liberation Serif',serif;font-size:11.5px;color:#595959;">T</span>
<span class="t" style="left:1522.60px;top:726.50px;font-family:'Liberation Serif',serif;font-size:7.5px;color:#595959;">st</span>
<span class="t" style="left:1581.20px;top:726.50px;font-family:'Liberation Sans',sans-serif;font-size:6px;color:#595959;">•</span>
<span class="t" style="left:1607.60px;top:726.80px;font-family:'Liberation Sans',sans-serif;font-size:12.5px;color:#595959;">.</span>
<span class="t" style="left:1658.40px;top:729.80px;font-family:'Liberation Serif',serif;font-size:8.5px;color:#595959;">T</span>
<span class="t" style="left:1460.50px;top:755.50px;font-family:'Liberation Serif',serif;font-size:13.5px;color:#595959;">gg</span>
<div style="left:1488.5px;top:757.5px;width:12px;height:12px;border:1px solid #595959;"></div>
<span class="t" style="left:1491.00px;top:759.60px;font-family:'Liberation Serif',serif;font-size:11.5px;color:#595959;">fi</span>
<span class="t" style="left:1514.00px;top:757.50px;font-family:'Liberation Serif',serif;font-size:15px;font-style:italic;color:#595959;">A</span>
<div style="left:1553.5px;top:753.5px;width:17.5px;height:23.5px;background:#424242;border:1px solid #2b2b2b;border-radius:3px;box-shadow:0 1px 0 rgba(255,255,255,0.05);"></div>
<span class="t" style="left:1557.60px;top:761.80px;font-family:'Liberation Sans',sans-serif;font-size:11.3px;color:#b4b4b4;transform:scaleX(0.8491);transform-origin:0 0;">...</span>
<div style="left:1440px;top:781px;width:273px;height:20px;background:#393939;"></div>
<svg style="left:1445.3px;top:786.3px;" width="5" height="9" viewBox="0 0 5 9"><path d="M0 0L5 4.5L0 9Z" fill="#858585"/></svg>
<span class="t" style="left:1460.50px;top:784.00px;font-family:'Liberation Sans',sans-serif;font-size:12.2px;color:#f4f4f4;letter-spacing:-0.494px;">Langue</span>
<div style="left:1440px;top:801px;width:273px;height:20px;background:#393939;"></div>
<svg style="left:1445.3px;top:806.3px;" width="5" height="9" viewBox="0 0 5 9"><path d="M0 0L5 4.5L0 9Z" fill="#858585"/></svg>
<span class="t" style="left:1460.50px;top:804.00px;font-family:'Liberation Sans',sans-serif;font-size:12.2px;color:#f4f4f4;letter-spacing:-0.108px;">Alignement visuel</span>
<div style="left:1440px;top:1027px;width:273px;height:24px;background:#282828;"></div>
<div style="left:1447px;top:1035px;width:1px;height:8px;background:#7d7d7d;"></div>
<div style="left:1450px;top:1035px;width:1px;height:8px;background:#7d7d7d;"></div>
<div style="left:1458px;top:1029px;width:69px;height:22px;background:#414141;"></div>
<span class="t" style="left:1463.20px;top:1034.00px;font-family:'Liberation Sans',sans-serif;font-size:11.3px;color:#f4f4f4;letter-spacing:-0.301px;">Transformer</span>
<span class="t" style="left:1531.10px;top:1034.00px;font-family:'Liberation Sans',sans-serif;font-size:11.3px;color:#c4c4c4;letter-spacing:-0.062px;">Historique</span>
<span class="t" style="left:1591.20px;top:1034.00px;font-family:'Liberation Sans',sans-serif;font-size:11.3px;color:#c4c4c4;letter-spacing:-0.127px;">Navigateur</span>
<svg style="left:0px;top:0px;" width="1713" height="1178" viewBox="0 0 1713 1178"><rect x="1464.5" y="1074.5" width="33" height="33" fill="#636363"/><rect x="1462.7" y="1072.9" width="5.8" height="5.8" fill="#636363"/><rect x="1462.7" y="1088" width="5.8" height="5.8" fill="#636363"/><rect x="1462.7" y="1103.2" width="5.8" height="5.8" fill="#636363"/><rect x="1478" y="1072.9" width="5.8" height="5.8" fill="#636363"/><rect x="1478" y="1103.2" width="5.8" height="5.8" fill="#636363"/><rect x="1493.4" y="1072.9" width="5.8" height="5.8" fill="#636363"/><rect x="1493.4" y="1088" width="5.8" height="5.8" fill="#636363"/><rect x="1493.4" y="1103.2" width="5.8" height="5.8" fill="#636363"/></svg>
<div style="left:1533px;top:1063px;width:65px;height:19.4px;background:#434343;border:1px solid #2b2b2b;border-radius:3px;box-shadow:0 1px 0 rgba(255,255,255,0.05);"></div>
<span class="t" style="left:1520.40px;top:1068.70px;font-family:'Liberation Sans',sans-serif;font-size:10px;color:#5a5a5a;letter-spacing:-0.753px;">X:</span>
<span class="t" style="left:1538.90px;top:1067.70px;font-family:'Liberation Sans',sans-serif;font-size:11.3px;color:#a0a0a0;">0 px</span>
<div style="left:1627px;top:1063px;width:65px;height:19.4px;background:#434343;border:1px solid #2b2b2b;border-radius:3px;box-shadow:0 1px 0 rgba(255,255,255,0.05);"></div>
<span class="t" style="left:1614.40px;top:1068.70px;font-family:'Liberation Sans',sans-serif;font-size:10px;color:#5a5a5a;transform:scaleX(0.8869);transform-origin:0 0;">L:</span>
<span class="t" style="left:1632.90px;top:1067.70px;font-family:'Liberation Sans',sans-serif;font-size:11.3px;color:#a0a0a0;">0 px</span>
<div style="left:1533px;top:1087.2px;width:65px;height:19.4px;background:#434343;border:1px solid #2b2b2b;border-radius:3px;box-shadow:0 1px 0 rgba(255,255,255,0.05);"></div>
<span class="t" style="left:1520.40px;top:1092.90px;font-family:'Liberation Sans',sans-serif;font-size:10px;color:#5a5a5a;letter-spacing:-0.206px;">Y:</span>
<span class="t" style="left:1538.90px;top:1091.90px;font-family:'Liberation Sans',sans-serif;font-size:11.3px;color:#a0a0a0;">0 px</span>
<div style="left:1627px;top:1087.2px;width:65px;height:19.4px;background:#434343;border:1px solid #2b2b2b;border-radius:3px;box-shadow:0 1px 0 rgba(255,255,255,0.05);"></div>
<span class="t" style="left:1612.50px;top:1092.90px;font-family:'Liberation Sans',sans-serif;font-size:10px;color:#5a5a5a;letter-spacing:-0.700px;">H:</span>
<span class="t" style="left:1632.90px;top:1091.90px;font-family:'Liberation Sans',sans-serif;font-size:11.3px;color:#a0a0a0;">0 px</span>
<div style="left:1533px;top:1117px;width:65px;height:19.4px;background:#434343;border:1px solid #2b2b2b;border-radius:3px;box-shadow:0 1px 0 rgba(255,255,255,0.05);"></div>
<span class="t" style="left:1520.40px;top:1122.70px;font-family:'Liberation Sans',sans-serif;font-size:10px;color:#5a5a5a;transform:scaleX(0.8700);transform-origin:0 0;">R:</span>
<span class="t" style="left:1538.90px;top:1121.70px;font-family:'Liberation Sans',sans-serif;font-size:11.3px;color:#a0a0a0;">0 °</span>
<svg style="left:1588px;top:1125.3px;" width="6" height="3" viewBox="0 0 6 3"><path d="M0 0H6L3.0 3Z" fill="#b4b4b4"/></svg>
<div style="left:1627px;top:1117px;width:65px;height:19.4px;background:#434343;border:1px solid #2b2b2b;border-radius:3px;box-shadow:0 1px 0 rgba(255,255,255,0.05);"></div>
<span class="t" style="left:1614.80px;top:1122.70px;font-family:'Liberation Sans',sans-serif;font-size:10px;color:#5a5a5a;transform:scaleX(0.7405);transform-origin:0 0;">S:</span>
<span class="t" style="left:1632.90px;top:1121.70px;font-family:'Liberation Sans',sans-serif;font-size:11.3px;color:#a0a0a0;">0 °</span>
<svg style="left:1682px;top:1125.3px;" width="6" height="3" viewBox="0 0 6 3"><path d="M0 0H6L3.0 3Z" fill="#b4b4b4"/></svg>
<svg style="left:1699px;top:1078px;" width="6" height="14" viewBox="0 0 6 14"><rect x="1" y="0.6" width="3.4" height="5.6" rx="1.7" fill="none" stroke="#b8b8b8" stroke-width="1"/><rect x="1" y="7.6" width="3.4" height="5.6" rx="1.7" fill="none" stroke="#b8b8b8" stroke-width="1"/><path d="M2.7 4.5V9.5" stroke="#b8b8b8" stroke-width="1"/></svg>
<div style="left:1710px;top:1175px;width:1px;height:1px;background:#d0d0d0;"></div>
<div style="left:1708px;top:1177px;width:1px;height:1px;background:#d0d0d0;"></div>
<div style="left:536px;top:530px;width:798px;height:385px;background:#414141;box-shadow:0 0 0 1px rgba(30,30,30,0.55);"></div>
<div style="left:536px;top:530px;width:798px;height:22px;background:#3d3d3d;"></div>
<div style="left:536px;top:552px;width:798px;height:30px;background:#333333;"></div>
<span class="t" style="left:902.20px;top:535.80px;font-family:'Liberation Sans',sans-serif;font-size:12.2px;color:#f2f2f2;letter-spacing:-0.442px;">Préférences</span>
<svg style="left:1319px;top:536.5px;" width="10" height="9" viewBox="0 0 10 9"><path d="M0.6 0.4L9.4 8.6M9.4 0.4L0.6 8.6" stroke="#f4f4f4" stroke-width="1.35" fill="none"/></svg>
<div style="left:553px;top:555px;width:24px;height:25px;background:#3b3b3b;border-radius:2px;box-shadow:0 1px 0 rgba(255,255,255,0.06);"></div>
<div style="left:579px;top:555px;width:24px;height:25px;background:#3b3b3b;border-radius:2px;box-shadow:0 1px 0 rgba(255,255,255,0.06);"></div>
<div style="left:621px;top:555px;width:24px;height:25px;background:#3b3b3b;border-radius:2px;box-shadow:0 1px 0 rgba(255,255,255,0.06);"></div>
<div style="left:647px;top:555px;width:10px;height:25px;background:#3b3b3b;border-radius:2px;box-shadow:0 1px 0 rgba(255,255,255,0.06);"></div>
<svg style="left:560px;top:561px;" width="10" height="12" viewBox="0 0 10 12"><path d="M9.3 0.7L0.9 5.9L9.3 11.2" fill="none" stroke="#c0c0c0" stroke-width="1.1"/></svg>
<svg style="left:586px;top:561px;" width="10" height="12" viewBox="0 0 10 12"><path d="M0.8 0.7L9.2 5.9L0.8 11.2" fill="none" stroke="#c0c0c0" stroke-width="1.1"/></svg>
<svg style="left:0px;top:0px;" width="1713" height="600" viewBox="0 0 1713 600"><rect x="625.00" y="561.50" width="3" height="3" fill="#9a9a9a"/><rect x="629.36" y="561.50" width="3" height="3" fill="#9a9a9a"/><rect x="633.72" y="561.50" width="3" height="3" fill="#9a9a9a"/><rect x="638.08" y="561.50" width="3" height="3" fill="#9a9a9a"/><rect x="625.00" y="565.80" width="3" height="3" fill="#9a9a9a"/><rect x="629.36" y="565.80" width="3" height="3" fill="#9a9a9a"/><rect x="633.72" y="565.80" width="3" height="3" fill="#9a9a9a"/><rect x="638.08" y="565.80" width="3" height="3" fill="#9a9a9a"/><rect x="625.00" y="570.10" width="3" height="3" fill="#9a9a9a"/><rect x="629.36" y="570.10" width="3" height="3" fill="#9a9a9a"/><rect x="633.72" y="570.10" width="3" height="3" fill="#9a9a9a"/><rect x="638.08" y="570.10" width="3" height="3" fill="#9a9a9a"/></svg>
<svg style="left:649.2px;top:566px;" width="5.6" height="3" viewBox="0 0 5.6 3"><path d="M0 0H5.6L2.8 3Z" fill="#f0f0f0"/></svg>
<span class="t" style="left:674.10px;top:563.20px;font-family:'Liberation Sans',sans-serif;font-size:11.3px;color:#f2f2f2;letter-spacing:-0.384px;">Performances</span>
<div style="left:1159px;top:557px;width:158px;height:20px;background:#484848;border-radius:2px;"></div>
<svg style="left:1163px;top:560px;" width="14" height="14" viewBox="0 0 14 14"><circle cx="5.8" cy="5.8" r="4.1" fill="none" stroke="#dcdcdc" stroke-width="1.2"/><path d="M8.8 8.8L12.8 12.8" stroke="#dcdcdc" stroke-width="1.4"/></svg>
<span class="t" style="left:1180.10px;top:563.20px;font-family:'Liberation Sans',sans-serif;font-size:11.3px;color:#9c9c9c;letter-spacing:-0.501px;">Rechercher</span>
<div style="left:846px;top:608.5px;width:287.5999999999999px;height:5px;background:#3b3b3b;border-top:1px solid #323232;border-bottom:1px solid #4e4e4e;border-radius:2.5px;"></div>
<div style="left:845.5px;top:608.5px;width:71.10000000000002px;height:5px;background:#2c2c2c;border-radius:2.5px;"></div>
<div style="left:846px;top:609px;width:70.10000000000002px;height:4px;background:#5f90d6;border-radius:2px;"></div>
<svg style="left:910.6px;top:604.2px;" width="11" height="12" viewBox="0 0 11 12"><defs><linearGradient id="kg611" x1="0" y1="0" x2="0" y2="1"><stop offset="0" stop-color="#f2f2f2"/><stop offset="1" stop-color="#b4b4b4"/></linearGradient></defs><path d="M0.9 1.9Q0.9 0.9 1.9 0.9H9.1Q10.1 0.9 10.1 1.9V7.6L5.5 11.1L0.9 7.6Z" fill="url(#kg611)" stroke="#2c2c2c" stroke-width="0.9"/></svg>
<svg style="left:0px;top:0px;" width="1713" height="700" viewBox="0 0 1713 700"><rect x="848.50" y="617" width="1" height="3" fill="#dedede"/><rect x="852.94" y="617" width="1" height="3" fill="#dedede"/><rect x="857.39" y="617" width="1" height="3" fill="#dedede"/><rect x="861.83" y="617" width="1" height="3" fill="#dedede"/><rect x="866.28" y="617" width="1" height="3" fill="#dedede"/><rect x="870.72" y="617" width="1" height="3" fill="#dedede"/><rect x="875.17" y="617" width="1" height="3" fill="#dedede"/><rect x="879.61" y="617" width="1" height="3" fill="#dedede"/><rect x="884.06" y="617" width="1" height="3" fill="#dedede"/><rect x="888.50" y="617" width="1" height="3" fill="#dedede"/><rect x="892.94" y="617" width="1" height="3" fill="#dedede"/><rect x="897.39" y="617" width="1" height="3" fill="#dedede"/><rect x="901.83" y="617" width="1" height="3" fill="#dedede"/><rect x="906.28" y="617" width="1" height="3" fill="#dedede"/><rect x="910.72" y="617" width="1" height="3" fill="#dedede"/><rect x="915.17" y="617" width="1" height="3" fill="#dedede"/><rect x="919.61" y="617" width="1" height="3" fill="#dedede"/><rect x="924.06" y="617" width="1" height="3" fill="#dedede"/><rect x="928.50" y="617" width="1" height="3" fill="#dedede"/><rect x="932.94" y="617" width="1" height="3" fill="#dedede"/><rect x="937.39" y="617" width="1" height="3" fill="#dedede"/><rect x="941.83" y="617" width="1" height="3" fill="#dedede"/><rect x="946.28" y="617" width="1" height="3" fill="#dedede"/><rect x="950.72" y="617" width="1" height="3" fill="#dedede"/><rect x="955.17" y="617" width="1" height="3" fill="#dedede"/><rect x="959.61" y="617" width="1" height="3" fill="#dedede"/><rect x="964.06" y="617" width="1" height="3" fill="#dedede"/><rect x="968.50" y="617" width="1" height="3" fill="#dedede"/><rect x="972.94" y="617" width="1" height="3" fill="#dedede"/><rect x="977.39" y="617" width="1" height="3" fill="#dedede"/><rect x="981.83" y="617" width="1" height="3" fill="#dedede"/><rect x="986.28" y="617" width="1" height="3" fill="#dedede"/><rect x="990.72" y="617" width="1" height="3" fill="#dedede"/><rect x="995.17" y="617" width="1" height="3" fill="#dedede"/><rect x="999.61" y="617" width="1" height="3" fill="#dedede"/><rect x="1004.06" y="617" width="1" height="3" fill="#dedede"/><rect x="1008.50" y="617" width="1" height="3" fill="#dedede"/><rect x="1012.94" y="617" width="1" height="3" fill="#dedede"/><rect x="1017.39" y="617" width="1" height="3" fill="#dedede"/><rect x="1021.83" y="617" width="1" height="3" fill="#dedede"/><rect x="1026.28" y="617" width="1" height="3" fill="#dedede"/><rect x="1030.72" y="617" width="1" height="3" fill="#dedede"/><rect x="1035.17" y="617" width="1" height="3" fill="#dedede"/><rect x="1039.61" y="617" width="1" height="3" fill="#dedede"/><rect x="1044.06" y="617" width="1" height="3" fill="#dedede"/><rect x="1048.50" y="617" width="1" height="3" fill="#dedede"/><rect x="1052.94" y="617" width="1" height="3" fill="#dedede"/><rect x="1057.39" y="617" width="1" height="3" fill="#dedede"/><rect x="1061.83" y="617" width="1" height="3" fill="#dedede"/><rect x="1066.28" y="617" width="1" height="3" fill="#dedede"/><rect x="1070.72" y="617" width="1" height="3" fill="#dedede"/><rect x="1075.17" y="617" width="1" height="3" fill="#dedede"/><rect x="1079.61" y="617" width="1" height="3" fill="#dedede"/><rect x="1084.06" y="617" width="1" height="3" fill="#dedede"/><rect x="1088.50" y="617" width="1" height="3" fill="#dedede"/><rect x="1092.94" y="617" width="1" height="3" fill="#dedede"/><rect x="1097.39" y="617" width="1" height="3" fill="#dedede"/><rect x="1101.83" y="617" width="1" height="3" fill="#dedede"/><rect x="1106.28" y="617" width="1" height="3" fill="#dedede"/><rect x="1110.72" y="617" width="1" height="3" fill="#dedede"/><rect x="1115.17" y="617" width="1" height="3" fill="#dedede"/><rect x="1119.61" y="617" width="1" height="3" fill="#dedede"/><rect x="1124.06" y="617" width="1" height="3" fill="#dedede"/><rect x="1128.50" y="617" width="1" height="3" fill="#dedede"/></svg>
<div style="left:846px;top:636.5px;width:287.5999999999999px;height:5px;background:#3b3b3b;border-top:1px solid #323232;border-bottom:1px solid #4e4e4e;border-radius:2.5px;"></div>
<div style="left:845.5px;top:636.5px;width:142.20000000000005px;height:5px;background:#2c2c2c;border-radius:2.5px;"></div>
<div style="left:846px;top:637px;width:141.20000000000005px;height:4px;background:#5f90d6;border-radius:2px;"></div>
<svg style="left:981.7px;top:632.2px;" width="11" height="12" viewBox="0 0 11 12"><defs><linearGradient id="kg639" x1="0" y1="0" x2="0" y2="1"><stop offset="0" stop-color="#f2f2f2"/><stop offset="1" stop-color="#b4b4b4"/></linearGradient></defs><path d="M0.9 1.9Q0.9 0.9 1.9 0.9H9.1Q10.1 0.9 10.1 1.9V7.6L5.5 11.1L0.9 7.6Z" fill="url(#kg639)" stroke="#2c2c2c" stroke-width="0.9"/></svg>
<svg style="left:0px;top:0px;" width="1713" height="700" viewBox="0 0 1713 700"><rect x="848.50" y="645" width="1" height="3" fill="#dedede"/><rect x="852.94" y="645" width="1" height="3" fill="#dedede"/><rect x="857.39" y="645" width="1" height="3" fill="#dedede"/><rect x="861.83" y="645" width="1" height="3" fill="#dedede"/><rect x="866.28" y="645" width="1" height="3" fill="#dedede"/><rect x="870.72" y="645" width="1" height="3" fill="#dedede"/><rect x="875.17" y="645" width="1" height="3" fill="#dedede"/><rect x="879.61" y="645" width="1" height="3" fill="#dedede"/><rect x="884.06" y="645" width="1" height="3" fill="#dedede"/><rect x="888.50" y="645" width="1" height="3" fill="#dedede"/><rect x="892.94" y="645" width="1" height="3" fill="#dedede"/><rect x="897.39" y="645" width="1" height="3" fill="#dedede"/><rect x="901.83" y="645" width="1" height="3" fill="#dedede"/><rect x="906.28" y="645" width="1" height="3" fill="#dedede"/><rect x="910.72" y="645" width="1" height="3" fill="#dedede"/><rect x="915.17" y="645" width="1" height="3" fill="#dedede"/><rect x="919.61" y="645" width="1" height="3" fill="#dedede"/><rect x="924.06" y="645" width="1" height="3" fill="#dedede"/><rect x="928.50" y="645" width="1" height="3" fill="#dedede"/><rect x="932.94" y="645" width="1" height="3" fill="#dedede"/><rect x="937.39" y="645" width="1" height="3" fill="#dedede"/><rect x="941.83" y="645" width="1" height="3" fill="#dedede"/><rect x="946.28" y="645" width="1" height="3" fill="#dedede"/><rect x="950.72" y="645" width="1" height="3" fill="#dedede"/><rect x="955.17" y="645" width="1" height="3" fill="#dedede"/><rect x="959.61" y="645" width="1" height="3" fill="#dedede"/><rect x="964.06" y="645" width="1" height="3" fill="#dedede"/><rect x="968.50" y="645" width="1" height="3" fill="#dedede"/><rect x="972.94" y="645" width="1" height="3" fill="#dedede"/><rect x="977.39" y="645" width="1" height="3" fill="#dedede"/><rect x="981.83" y="645" width="1" height="3" fill="#dedede"/><rect x="986.28" y="645" width="1" height="3" fill="#dedede"/><rect x="990.72" y="645" width="1" height="3" fill="#dedede"/><rect x="995.17" y="645" width="1" height="3" fill="#dedede"/><rect x="999.61" y="645" width="1" height="3" fill="#dedede"/><rect x="1004.06" y="645" width="1" height="3" fill="#dedede"/><rect x="1008.50" y="645" width="1" height="3" fill="#dedede"/><rect x="1012.94" y="645" width="1" height="3" fill="#dedede"/><rect x="1017.39" y="645" width="1" height="3" fill="#dedede"/><rect x="1021.83" y="645" width="1" height="3" fill="#dedede"/><rect x="1026.28" y="645" width="1" height="3" fill="#dedede"/><rect x="1030.72" y="645" width="1" height="3" fill="#dedede"/><rect x="1035.17" y="645" width="1" height="3" fill="#dedede"/><rect x="1039.61" y="645" width="1" height="3" fill="#dedede"/><rect x="1044.06" y="645" width="1" height="3" fill="#dedede"/><rect x="1048.50" y="645" width="1" height="3" fill="#dedede"/><rect x="1052.94" y="645" width="1" height="3" fill="#dedede"/><rect x="1057.39" y="645" width="1" height="3" fill="#dedede"/><rect x="1061.83" y="645" width="1" height="3" fill="#dedede"/><rect x="1066.28" y="645" width="1" height="3" fill="#dedede"/><rect x="1070.72" y="645" width="1" height="3" fill="#dedede"/><rect x="1075.17" y="645" width="1" height="3" fill="#dedede"/><rect x="1079.61" y="645" width="1" height="3" fill="#dedede"/><rect x="1084.06" y="645" width="1" height="3" fill="#dedede"/><rect x="1088.50" y="645" width="1" height="3" fill="#dedede"/><rect x="1092.94" y="645" width="1" height="3" fill="#dedede"/><rect x="1097.39" y="645" width="1" height="3" fill="#dedede"/><rect x="1101.83" y="645" width="1" height="3" fill="#dedede"/><rect x="1106.28" y="645" width="1" height="3" fill="#dedede"/><rect x="1110.72" y="645" width="1" height="3" fill="#dedede"/><rect x="1115.17" y="645" width="1" height="3" fill="#dedede"/><rect x="1119.61" y="645" width="1" height="3" fill="#dedede"/><rect x="1124.06" y="645" width="1" height="3" fill="#dedede"/><rect x="1128.50" y="645" width="1" height="3" fill="#dedede"/></svg>
<div style="left:846px;top:664.5px;width:297.20000000000005px;height:5px;background:#3b3b3b;border-top:1px solid #323232;border-bottom:1px solid #4e4e4e;border-radius:2.5px;"></div>
<div style="left:845.5px;top:664.5px;width:40px;height:5px;background:#2c2c2c;border-radius:2.5px;"></div>
<div style="left:846px;top:665px;width:39px;height:4px;background:#5f90d6;border-radius:2px;"></div>
<svg style="left:879.5px;top:660.2px;" width="11" height="12" viewBox="0 0 11 12"><defs><linearGradient id="kg667" x1="0" y1="0" x2="0" y2="1"><stop offset="0" stop-color="#f2f2f2"/><stop offset="1" stop-color="#b4b4b4"/></linearGradient></defs><path d="M0.9 1.9Q0.9 0.9 1.9 0.9H9.1Q10.1 0.9 10.1 1.9V7.6L5.5 11.1L0.9 7.6Z" fill="url(#kg667)" stroke="#2c2c2c" stroke-width="0.9"/></svg>
<svg style="left:0px;top:0px;" width="1713" height="700" viewBox="0 0 1713 700"><rect x="884.50" y="673" width="1" height="3" fill="#dedede"/><rect x="921.00" y="673" width="1" height="3" fill="#dedede"/><rect x="1029.70" y="673" width="1" height="3" fill="#dedede"/></svg>
<div style="left:1136px;top:602.5px;width:65px;height:19.5px;background:#2e2e2e;border:1px solid #292929;border-radius:3px;box-shadow:0 1px 0 rgba(255,255,255,0.07);"></div>
<span class="t" style="left:1142.50px;top:607.20px;font-family:'Liberation Sans',sans-serif;font-size:11.3px;color:#f2f2f2;letter-spacing:-0.443px;">16384 MB</span>
<div style="left:1136px;top:630.5px;width:65px;height:19.5px;background:#2e2e2e;border:1px solid #292929;border-radius:3px;box-shadow:0 1px 0 rgba(255,255,255,0.07);"></div>
<span class="t" style="left:1142.50px;top:635.20px;font-family:'Liberation Sans',sans-serif;font-size:11.3px;color:#f2f2f2;letter-spacing:-0.443px;">32768 MB</span>
<div style="left:1146px;top:658.3px;width:55px;height:19.7px;background:#2e2e2e;border:1px solid #292929;border-radius:3px;box-shadow:0 1px 0 rgba(255,255,255,0.07);"></div>
<span class="t" style="left:1152.60px;top:663.00px;font-family:'Liberation Sans',sans-serif;font-size:11.3px;color:#f2f2f2;letter-spacing:-0.647px;">1024</span>
<span class="t" style="left:707.10px;top:603.10px;font-family:'Liberation Sans',sans-serif;font-size:11.3px;color:#f2f2f2;letter-spacing:-0.097px;">Limite d&#x27;utilisation de RAM:</span>
<span class="t" style="left:666.00px;top:631.20px;font-family:'Liberation Sans',sans-serif;font-size:11.3px;color:#f2f2f2;letter-spacing:-0.258px;">Avertissement sur l&#x27;espace disque à:</span>
<span class="t" style="left:745.40px;top:659.40px;font-family:'Liberation Sans',sans-serif;font-size:11.3px;color:#f2f2f2;letter-spacing:-0.105px;">Limite d&#x27;annulation:</span>
<span class="t" style="left:745.90px;top:685.00px;font-family:'Liberation Sans',sans-serif;font-size:11.3px;color:#f2f2f2;letter-spacing:-0.135px;">Qualité d&#x27;affichage:</span>
<span class="t" style="left:699.20px;top:748.80px;font-family:'Liberation Sans',sans-serif;font-size:11.3px;color:#f2f2f2;letter-spacing:-0.137px;">Intervalle restauration fichier:</span>
<span class="t" style="left:750.20px;top:772.00px;font-family:'Liberation Sans',sans-serif;font-size:11.3px;color:#f2f2f2;letter-spacing:-0.071px;">*Moteur de rendu:</span>
<span class="t" style="left:775.30px;top:795.30px;font-family:'Liberation Sans',sans-serif;font-size:11.3px;color:#f2f2f2;letter-spacing:-0.495px;">Rendu Retina:</span>
<span class="t" style="left:723.90px;top:816.30px;font-family:'Liberation Sans',sans-serif;font-size:11.3px;color:#f2f2f2;letter-spacing:-0.171px;">*Accélération matérielle:</span>
<div style="left:844px;top:681px;width:210px;height:18px;background:#3e3e3e;border:1px solid #292929;border-radius:3px;box-shadow:0 1px 0 rgba(255,255,255,0.07);"></div>
<span class="t" style="left:849.50px;top:685.00px;font-family:'Liberation Sans',sans-serif;font-size:11.3px;color:#f2f2f2;letter-spacing:-0.152px;">Bilinéaire (qualité optimale)</span>
<svg style="left:1043px;top:688.3px;" width="6" height="3" viewBox="0 0 6 3"><path d="M0 0H6L3.0 3Z" fill="#e4e4e4"/></svg>
<div style="left:844px;top:743.3px;width:60px;height:19.5px;background:#2e2e2e;border:1px solid #292929;border-radius:3px;box-shadow:0 1px 0 rgba(255,255,255,0.07);"></div>
<span class="t" style="left:850.20px;top:748.10px;font-family:'Liberation Sans',sans-serif;font-size:11.3px;color:#f2f2f2;letter-spacing:-0.530px;">300</span>
<svg style="left:893.8px;top:751.1px;" width="6" height="3" viewBox="0 0 6 3"><path d="M0 0H6L3.0 3Z" fill="#e4e4e4"/></svg>
<span class="t" style="left:905.80px;top:748.00px;font-family:'Liberation Sans',sans-serif;font-size:11.3px;color:#f2f2f2;letter-spacing:-0.437px;">secondes</span>
<div style="left:844px;top:768px;width:300px;height:18px;background:#3e3e3e;border:1px solid #292929;border-radius:3px;box-shadow:0 1px 0 rgba(255,255,255,0.07);"></div>
<span class="t" style="left:849.50px;top:772.00px;font-family:'Liberation Sans',sans-serif;font-size:11.3px;color:#f2f2f2;letter-spacing:-0.418px;">Default (NVIDIA GeForce RTX 2060)</span>
<svg style="left:1133px;top:775.5px;" width="6" height="3" viewBox="0 0 6 3"><path d="M0 0H6L3.0 3Z" fill="#e4e4e4"/></svg>
<div style="left:844px;top:791px;width:300px;height:18px;background:#3e3e3e;border:1px solid #292929;border-radius:3px;box-shadow:0 1px 0 rgba(255,255,255,0.07);"></div>
<span class="t" style="left:849.50px;top:795.30px;font-family:'Liberation Sans',sans-serif;font-size:11.3px;color:#f2f2f2;letter-spacing:-0.041px;">Automatique (optimal)</span>
<svg style="left:1133px;top:798.5px;" width="6" height="3" viewBox="0 0 6 3"><path d="M0 0H6L3.0 3Z" fill="#e4e4e4"/></svg>
<div style="left:844.3px;top:705px;width:11.7px;height:11.7px;background:#5c5c5c;border:1px solid #4d7fd0;border-radius:2.5px;"></div>
<span class="t" style="left:860.30px;top:706.10px;font-family:'Liberation Sans',sans-serif;font-size:11.3px;color:#f2f2f2;letter-spacing:-0.252px;">Diffuser les dégradés</span>
<div style="left:845.2px;top:725.2px;width:9.8px;height:9.8px;background:#5c5c5c;border-radius:2px;"></div>
<span class="t" style="left:860.30px;top:724.60px;font-family:'Liberation Sans',sans-serif;font-size:11.3px;color:#f2f2f2;letter-spacing:-0.198px;">Utiliser une découpe précise</span>
<div style="left:845.2px;top:816.4px;width:9.8px;height:9.8px;background:#5c5c5c;border-radius:2px;"></div>
<span class="t" style="left:860.30px;top:816.30px;font-family:'Liberation Sans',sans-serif;font-size:11.3px;color:#f2f2f2;letter-spacing:-0.207px;">Activer l&#x27;accélération matérielle OpenCL</span>
<span class="t" style="left:1099.90px;top:848.00px;font-family:'Liberation Sans',sans-serif;font-size:11.3px;color:#f2f2f2;letter-spacing:-0.275px;">* Redémarrage requis</span>
<div style="left:1247px;top:884.5px;width:75px;height:18.8px;background:#3f3f3f;border:1px solid #303030;border-radius:3px;box-shadow:0 1px 0 rgba(255,255,255,0.06);"></div>
<span class="t" style="left:1267.50px;top:889.00px;font-family:'Liberation Sans',sans-serif;font-size:11.3px;color:#f2f2f2;letter-spacing:-0.581px;">Fermer</span>
</body></html>
